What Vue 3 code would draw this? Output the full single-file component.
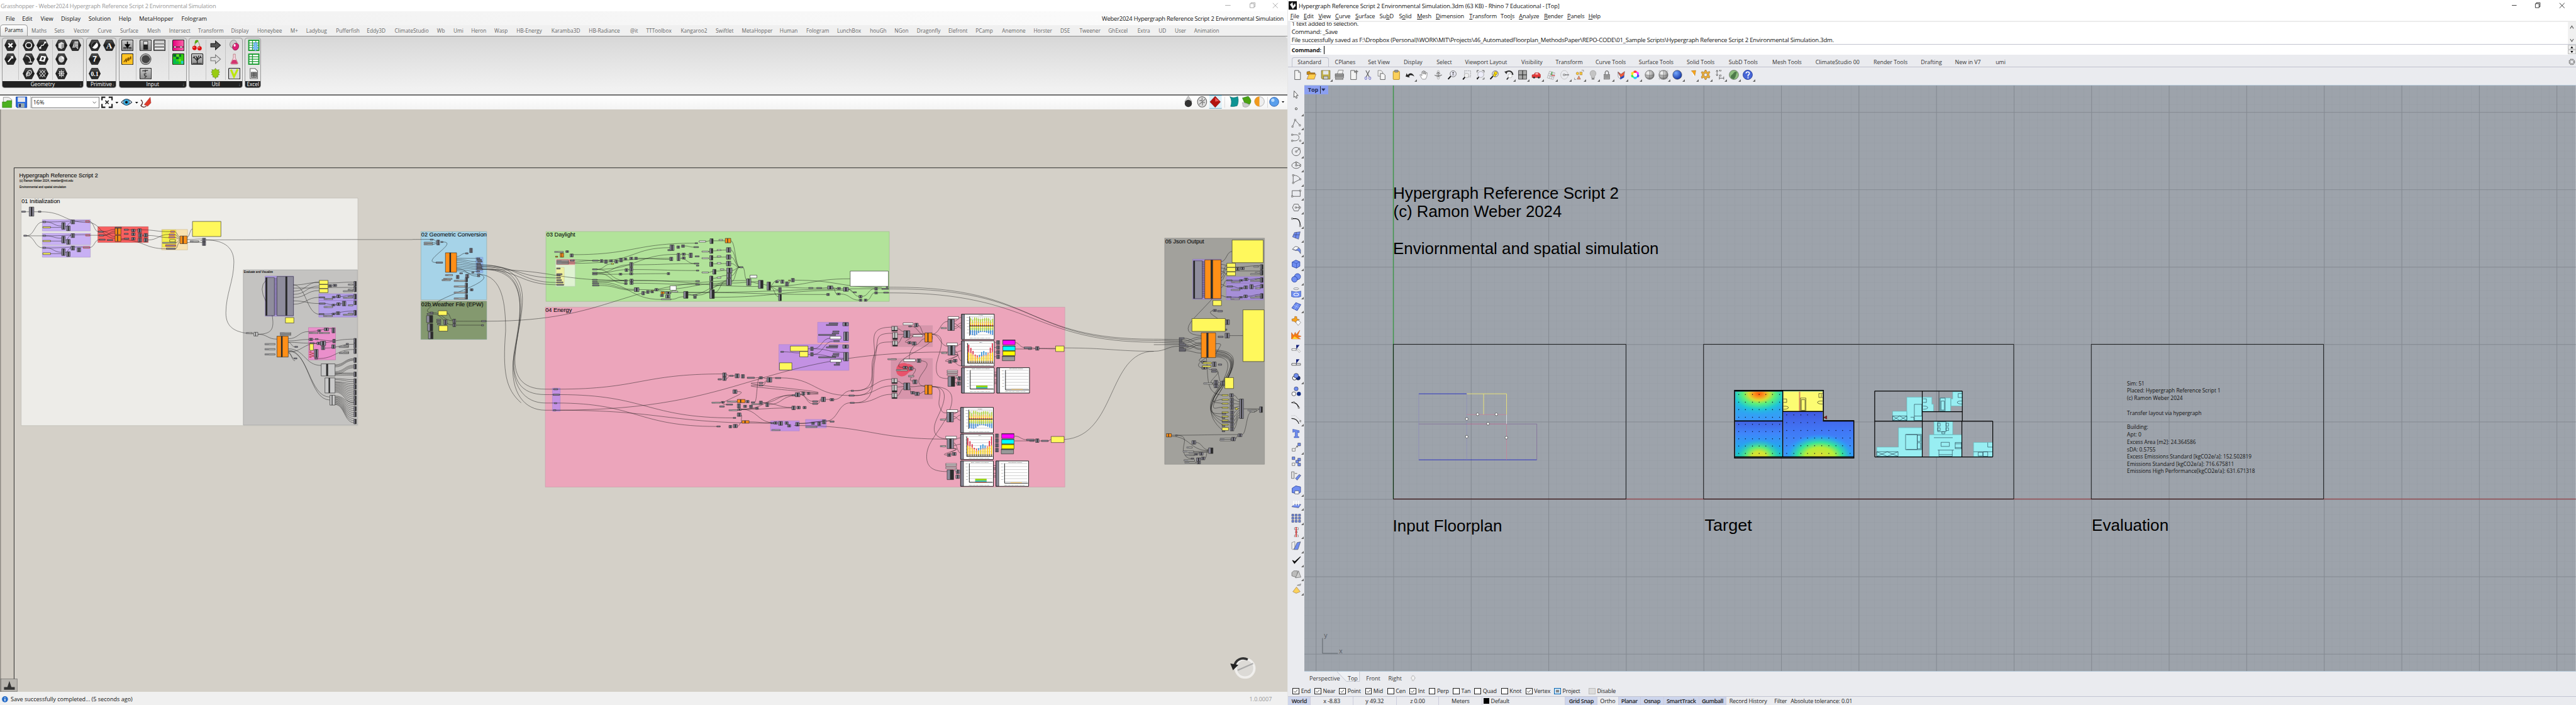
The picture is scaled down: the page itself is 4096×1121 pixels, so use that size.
<script setup>
const u = (n) => `calc(var(--u) * ${n})`
const cells = (s, end) => {
  const a = s.split('|').map((v) => { const i = v.lastIndexOf('@'); return { t: v.slice(0, i), x: +v.slice(i + 1) } })
  return a.map((c, i) => ({ ...c, w: (i + 1 < a.length ? a[i + 1].x : end) - c.x }))
}
const ghMenu = cells('File@17|Edit@66|View@121|Display@182|Solution@264|Help@354|MetaHopper@415|Fologram@541', 640)
const ghTabs = cells('Maths@94|Sets@162|Vector@220|Curve@291|Surface@358|Mesh@439|Intersect@504|Transform@591|Display@689|Honeybee@767|M+@866|Ladybug@913|Pufferfish@1002|Eddy3D@1094|ClimateStudio@1177|Wb@1303|Umi@1352|Heron@1405|Wasp@1474|HB-Energy@1540|Karamba3D@1644|HB-Radiance@1756|@it@1879|TTToolbox@1927|Kangaroo2@2030|Swiftlet@2134|MetaHopper@2212|Human@2325|Fologram@2404|LunchBox@2496|houGh@2594|NGon@2667|Dragonfly@2734|Elefront@2828|PCamp@2909|Anemone@2988|Horster@3082|DSE@3162|Tweener@3219|GhExcel@3305|Extra@3392|UD@3455|User@3503|Animation@3561', 3660)
const rhMenu = cells('_File@3847|_Edit@3887|_View@3931|_Curve@3981|_Surface@4041|Su_bD@4113|S_olid@4171|_Mesh@4225|_Dimension@4281|_Transform@4381|Too_ls@4474|_Analyze@4529|_Render@4604|_Panels@4673|_Help@4736', 4790)
  .map((c) => { const i = c.t.indexOf('_'); return { ...c, a: c.t.slice(0, i), k: c.t[i + 1], b: c.t.slice(i + 2) } })
const rhTabs = cells('CPlanes@3980|Set View@4079|Display@4185|Select@4283|Viewport Layout@4368|Visibility@4536|Transform@4638|Curve Tools@4757|Surface Tools@4886|Solid Tools@5029|SubD Tools@5154|Mesh Tools@5284|ClimateStudio 00@5413|Render Tools@5586|Drafting@5727|New in V7@5829|umi@5950', 6000)
const osnaps = cells('End@3854|Near@3919.5|Point@3993|Mid@4070|Cen@4136.5|Int@4203|Perp@4259.5|Tan@4332|Quad@4396|Knot@4476|Vertex@4549|Project@4634|Disable@4737', 4850)
const checked = ['End', 'Near', 'Point', 'Mid', 'Int', 'Vertex']
const status = [
  ['World', 67, 1], ['x -8.83', 127], ['y 49.32', 129], ['z 0.00', 127], ['Meters', 129], ['Default', 248, 0, 1],
  ['Grid Snap', 95, 1], ['Ortho', 63], ['Planar', 66, 1], ['Osnap', 69, 1], ['SmartTrack', 105, 1], ['Gumball', 82, 1],
]

/* ribbon icons, 36 x 34 */
const hex = (s) => `<path d="M9 1H27L35 17L27 33H9L1 17Z" fill="url(#hexg)" stroke="#111" stroke-width="1.5"/>${s}`
const box = (s, f = 'url(#boxg)') => `<rect x="1" y="0.7" width="34" height="32.6" rx="3" fill="${f}" stroke="#222" stroke-width="2"/>${s}`
const S = (w) => `fill="none" stroke="#fff" stroke-width="${w}"`
const ribbon = [
  { t: 'Geometry', x: 5, w: 245, arrow: 1, groups: [
    { w: 50, cols: [[hex(`<path d="M12 11L24 23M24 11L12 23" ${S(4.5)}/>`), hex(`<path d="M11 25L22 12" ${S(4)}/><path d="M18 8l8 0l0 9z" fill="#fff"/>`), '']] },
    { w: 100, cols: [
      [hex(`<ellipse cx="18" cy="17" rx="9" ry="8" ${S(3)}/>`), hex(`<path d="M10 7C20 8 24 15 24 26M18 26H29" ${S(2.5)}/>`), hex(`<path d="M13 26C6 17 20 3 25 9S17 28 14 22S20 12 21 14S18 20 17 19" ${S(2)}/>`)],
      [hex(`<path d="M11 25L15 17H20L25 9" ${S(2.5)}/><path d="M8 22h6v5H8zM23 6h6v5h-6z" fill="#fff"/>`), hex('<path d="M8 22L14 7L29 9L24 25Z" fill="#fff"/><path d="M14 19L17 11L23 13L20 20Z" fill="#333"/>'), hex(`<path d="M18 7L27 17L18 27L9 17ZM10 7L26 27M26 7L10 27" ${S(1.8)}/>`)]] },
    { w: 94, cols: [
      [hex('<path d="M9 12L18 7L26 11V23L18 28L9 24Z" fill="#ddd"/><path d="M18 14L26 11V23L18 28Z" fill="#999"/>'), hex('<ellipse cx="18" cy="17" rx="9" ry="10" fill="#ccc"/><path d="M18 7L27 15L20 16Z" fill="#fff"/>'), hex(`<path d="M18 6V28M8 17H28M11 9L25 25M25 9L11 25" ${S(1.5)}/><rect x="12" y="11" width="12" height="12" ${S(1.5)}/>`)],
      [hex('<path d="M10 24L16 6H26V28L20 22Z" fill="#bbb" stroke="#fff"/><path d="M16 6V20L10 24M16 20L26 22M16 13H26" stroke="#555" fill="none"/>'), '', '']] }] },
  { t: 'Primitive', x: 256, w: 91, arrow: 1, groups: [{ w: 91, cols: [
    [hex('<circle cx="18" cy="17" r="10" fill="#fff"/><path d="M11 24A10 10 0 0 1 24 9Z" fill="#222"/>'), hex('<text x="18" y="25" font-size="23" font-weight="bold" text-anchor="middle" fill="#fff">7</text>'), hex('<text x="18" y="24" font-size="19" font-weight="bold" text-anchor="middle" fill="#fff" font-family="Liberation Serif">0.1</text>')],
    [hex('<text x="18" y="26" font-size="25" font-weight="bold" text-anchor="middle" fill="#fff" font-family="Liberation Serif">A</text>'), '', '']] }] },
  { t: 'Input', x: 353, w: 203, arrow: 1, groups: [
    { w: 51, cols: [[box('<path d="M18 6V17M12 15L18 23L24 15Z" stroke="#000" stroke-width="3"/><path d="M6 24H30M8 24V29M13 24V29M18 24V29M23 24V29M28 24V29" stroke="#000" stroke-width="1.6"/>'), box('<path d="M7 26L14 17V26L21 12V22L28 9V18" fill="none" stroke="#8a5a00" stroke-width="3"/>', '#ffc425'), '']] },
    { w: 98, cols: [
      [box('<rect x="11" y="4" width="14" height="26" fill="#222"/><rect x="12.500" y="5.500" width="11" height="9" fill="#ddd"/>'), '<circle cx="18" cy="17" r="16" fill="#aaa" stroke="#555" stroke-width="2"/><path d="M28 10A12 12 0 1 0 28 24L32 17Z" fill="#444"/>', box('<path d="M17 5V13M8 9L25 7M20 17L14 18L15 23L20 25L15 30" fill="none" stroke="#444" stroke-width="3"/>')],
      [box('<rect x="3" y="4" width="30" height="6" fill="#eee" stroke="#444"/><rect x="3" y="14" width="30" height="6" fill="#eee" stroke="#444"/><rect x="3" y="24" width="30" height="6" fill="#eee" stroke="#444"/>'), '', '']] },
    { w: 54, cols: [[box('<path d="M1 22H12M12 22H24M24 22H35" stroke="#222" stroke-width="2"/><circle cx="8" cy="22" r="3" fill="#fff" stroke="#222"/><circle cx="26" cy="22" r="3" fill="#fff" stroke="#222"/>', 'url(#mag)'), box('<path d="M3 3H12V10H3ZM20 3H26V10H20ZM11 10H19V17H11Z" fill="#063"/><path d="M12 3H20V10H12ZM19 17H26V24H19Z" fill="#6d2"/><path d="M3 17H11V31H3ZM12 24H19V31H12Z" fill="#0b5"/><path d="M26 22H33V31H26Z" fill="#2cc"/>', '#3c1'), '']] }] },
  { t: 'Util', x: 563, w: 161, arrow: 1, groups: [
    { w: 50, cols: [['<path d="M10 20C11 12 15 8 19 3C22 9 26 14 26 22" fill="none" stroke="#784" stroke-width="1.5"/><path d="M13 2Q20-1 22 4Q18 10 10 12Q11 5 13 2" fill="#5a1"/><circle cx="10" cy="25" r="6.500" fill="#d11"/><circle cx="25" cy="26" r="6.500" fill="#d11"/><circle cx="8" cy="23" r="2" fill="#f99"/><circle cx="23" cy="24" r="2" fill="#f99"/>', box('<path d="M18 30V16M18 22L9 12M18 20L27 11M18 17L14 7M18 17L23 6M9 12L5 13M27 11L31 13M10 12L8 7M27 11L28 7M4 30H32" stroke="#111" stroke-width="2.200" fill="none"/>'), '']] },
    { w: 58, cols: [['<path d="M4 12H18V4L33 17L18 30V22H4Z" fill="#555" stroke="#222" stroke-width="2"/>', '<path d="M4 12H18V4L33 17L18 30V22H4Z" fill="#ddd" stroke="#777" stroke-width="2"/>', '<path d="M18 1L22 6L29 5L27 10L31 12L27 16L30 20L25 22L26 27L20 28L18 33L16 28L10 27L11 22L6 20L9 16L5 12L9 10L7 5L14 6Z" fill="#9c1" stroke="#573" />']] },
    { w: 52, cols: [['<ellipse cx="15" cy="13" rx="10" ry="12" fill="#ccc" stroke="#666" transform="rotate(25 15 13)"/><ellipse cx="22" cy="21" rx="9" ry="11" fill="#d27" stroke="#613" transform="rotate(25 22 21)"/><ellipse cx="19" cy="17" rx="3" ry="4" fill="#fff"/>', '<path d="M15 2H21V13L29 29Q29 32 25 32H11Q7 32 7 29L15 13Z" fill="#f4d4e0" stroke="#944"/><path d="M13 19H23L28 29Q28 31 25 31H11Q8 31 8 29Z" fill="#d3366f"/>', box('<path d="M8 5L17 26L28 4" fill="none" stroke="#bde80c" stroke-width="6"/>', '#d6d6d6')]] }] },
  { t: 'Excel', x: 730, w: 48, groups: [{ w: 48, cols: [[
    '<rect x="3" y="2" width="30" height="30" fill="#fff" stroke="#159a2d" stroke-width="3.500"/><path d="M3 10H33M3 17H33M3 24H33M14 2V32M24 2V32" stroke="#159a2d" stroke-width="2"/><path d="M18 9H28V23H33L23 34L13 23H18Z" fill="#7cc0f5" stroke="#2a7ac0" stroke-width="1"/>',
    '<rect x="3" y="2" width="30" height="30" fill="#fff" stroke="#159a2d" stroke-width="3.500"/><path d="M3 10H33M3 17H33M3 24H33M14 2V32" stroke="#159a2d" stroke-width="2.500"/>',
    '<path d="M7 2H22L29 9V32H7Z" fill="#fff" stroke="#666" stroke-width="2"/><path d="M11 13H26V28H11ZM11 18H26M11 23H26M16 13V28M21 13V28" fill="none" stroke="#222" stroke-width="2"/>']] }] },
]

/* modelling toolbar icons, 30 x 30 */
const page = '<path d="M7 2H18L24 8V29H7Z" fill="#f4f4f4" stroke="#444" stroke-width="1.500"/><path d="M18 2V8H24" fill="none" stroke="#444"/>'
const mag = '<circle cx="18" cy="12" r="9" fill="#eef" fill-opacity=".5" stroke="#555" stroke-width="1.500"/><path d="M11 19L3 28" stroke="#111" stroke-width="3.500"/>'
const ball = (f) => `<circle cx="15" cy="15" r="13.500" fill="${f}" stroke="#333"/>`
const toolIcons = [
  page,
  '<path d="M2 6L10 4L13 9H26V14H2Z" fill="#c98a10" stroke="#543"/><path d="M2 28L8 13H29L24 28Z" fill="#ffcf4d" stroke="#743"/>',
  '<path d="M2 2H28V28H6L2 25Z" fill="#c2b048" stroke="#443"/><rect x="7" y="3" width="16" height="11" fill="#e3e6ea"/><rect x="9" y="19" width="13" height="9" fill="#ccc" stroke="#443"/>',
  '<path d="M8 12L12 1H26L23 12" fill="#eee" stroke="#444"/><path d="M2 12H27V19H2Z" fill="#999" stroke="#222"/><path d="M2 20H27V24H2ZM3 25H25V29H3Z" fill="#ddd" stroke="#222"/>',
  page + '<path d="M18 5H29M24 1V12" stroke="#777" stroke-width="3"/>',
  '<path d="M9 2L19 21M20 2L10 21" stroke="#555" stroke-width="2"/><ellipse cx="9" cy="25" rx="3" ry="4" fill="none" stroke="#77c" stroke-width="2"/><ellipse cx="21" cy="25" rx="3" ry="4" fill="none" stroke="#77c" stroke-width="2"/>',
  '<path d="M4 2H13L18 7V19H4Z" fill="#eee" stroke="#444"/><path d="M11 11H20L25 16V29H11Z" fill="#f7f7f7" stroke="#444" stroke-width="1.500"/>',
  '<rect x="6" y="4" width="19" height="25" rx="2" fill="#fbd05a" stroke="#a77a10" stroke-width="1.500"/><rect x="10" y="1" width="11" height="6" rx="2" fill="#999" stroke="#444"/>',
  '<path d="M8 16C14 8 22 8 28 20C20 14 15 15 12 19L14 23L2 20L5 10Z" fill="#222"/>',
  '<path d="M9 26L3 15L6 14L9 18V6L12 5L13 13V3L16 3L17 13V5L20 5V14L22 8L25 9L24 20L20 28H11Z" fill="#fff" stroke="#444"/>',
  '<ellipse cx="15" cy="15" rx="4" ry="13" fill="none" stroke="#bbb" stroke-width="2"/><path d="M4 16Q15 22 26 15M15 7V22M10 12L15 7L20 12" stroke="#555" stroke-width="1.800" fill="none"/>',
  mag + '<path d="M15 9H21M18 6V12M15 15H21" stroke="#333" stroke-width="1.500"/>',
  '<rect x="9" y="3" width="18" height="18" fill="none" stroke="#555" stroke-dasharray="3 2"/><circle cx="15" cy="17" r="7" fill="#eee" stroke="#888"/><path d="M10 22L4 29" stroke="#111" stroke-width="3.500"/>',
  '<path d="M5 8V2H10M20 2H26V8M26 23V28H21M5 23V28" fill="none" stroke="#333" stroke-width="1.500"/><circle cx="16" cy="14" r="9" fill="#eef" fill-opacity=".6" stroke="#777"/><path d="M10 21L5 28" stroke="#111" stroke-width="3"/>',
  mag + '<circle cx="19" cy="10" r="5" fill="#fd0" stroke="#553"/><circle cx="16" cy="16" r="4" fill="#fd0" stroke="#553"/>',
  '<path d="M5 8C14 0 26 4 27 15" stroke="#333" stroke-width="4" fill="none"/><path d="M2 5L12 4L8 13Z" fill="#333"/><circle cx="19" cy="18" r="6" fill="#fff" stroke="#888"/><path d="M14 23L9 29" stroke="#222" stroke-width="3"/>',
  '<path d="M3 2H27V28H3Z" fill="#aaa" stroke="#333" stroke-width="1.500"/><path d="M15 2V28M3 15H27" stroke="#222" stroke-width="2"/>',
  '<path d="M2 15L8 14L11 9H22L27 14V23H2Z" fill="#e33b3b" stroke="#911"/><path d="M12 10H20V14H12Z" fill="#fcc"/><circle cx="8" cy="23" r="3" fill="#333"/><circle cx="22" cy="23" r="3" fill="#333"/>',
  '<path d="M4 24L11 4L27 9L22 29ZM7 17L24 22M9 11L26 16M10 26L17 6M16 28L22 8" stroke="#888" fill="none"/><path d="M16 16L27 18" stroke="#d33" stroke-width="2"/><path d="M16 16L19 6" stroke="#3a3" stroke-width="2"/>',
  '<ellipse cx="14" cy="15" rx="11" ry="13" fill="none" stroke="#bbb" stroke-width="1.500"/><path d="M14 15H28" stroke="#222" stroke-width="1.500"/><rect x="11" y="13" width="5" height="4" fill="#fff" stroke="#222"/>',
  '<circle cx="10" cy="11" r="4" fill="#fc3" stroke="#864"/><rect x="17" y="7" width="7" height="8" fill="#fc3" stroke="#864"/><path d="M14 18L19 28H9Z" fill="#e97" stroke="#743"/><path d="M22 1H28V6M1 24V29H6" fill="none" stroke="#555"/>',
  '<path d="M10 19C3 13 6 2 15 2S27 13 20 19V24H10Z" fill="#c4c4c4" stroke="#888"/><path d="M11 25H19V29H11Z" fill="#777"/>',
  '<path d="M10 14V7Q15-1 20 7V14" fill="none" stroke="#777" stroke-width="2.500"/><rect x="7" y="14" width="16" height="14" fill="#aaa" stroke="#444"/><path d="M8 18H22M8 22H22" stroke="#555"/>',
  '<path d="M5 6L14 13L25 5L22 20L12 23Z" fill="#f05a3c" stroke="#533"/><path d="M5 8L12 20L12 27L6 22Z" fill="#fff" stroke="#445"/><path d="M12 23L24 16L23 23L12 29Z" fill="#2b49b5"/>',
  '<circle cx="15" cy="8" r="5.500" fill="#f33"/><circle cx="21" cy="11" r="5" fill="#f3f"/><circle cx="22" cy="18" r="5" fill="#54f"/><circle cx="15" cy="22" r="5.500" fill="#2cf"/><circle cx="8" cy="18" r="5" fill="#3e5"/><circle cx="8" cy="11" r="5" fill="#fd2"/><circle cx="15" cy="15" r="6" fill="#fff"/>',
  ball('url(#gball)') + '<path d="M2 15Q15 20 28 15M15 2V28" fill="none" stroke="#555"/>',
  '<path d="M4 0V30M10 0V30M20 0V30M26 0V30M0 4H30M0 26H30" stroke="#aaa" stroke-width="1"/>' + ball('url(#gball)') + '<path d="M2 15Q15 20 28 15M15 2V28" fill="none" stroke="#555"/>',
  ball('url(#bball)'),
  '<path d="M14 3L27 2L24 18Z" fill="#f7a51c" stroke="#a60"/><path d="M14 3L24 18L21 20Z" fill="#fff"/>',
  '<path d="M13 1H17L18 5L22 7L26 4L28 8L25 12V16L28 20L26 25L22 23L18 25L17 29H13L12 25L8 23L4 26L2 21L5 17V12L2 9L4 5L8 7L12 5Z" fill="#e8ac38" stroke="#85561a"/><circle cx="15" cy="15" r="5" fill="#eaebef" stroke="#85561a"/>',
  '<path d="M6 2V17M3 5L6 1L9 5M3 14L6 18L9 14M12 2H18M12 17H18M13 20V29M26 20V29M13 25H26" fill="none" stroke="#333" stroke-width="1.300"/><path d="M14 0h4v4h-4zM14 15h4v4h-4z" fill="#fff" stroke="#333"/>',
  '<circle cx="15" cy="15" r="14" fill="#8fbf7f" stroke="#444"/><path d="M6 24C4 16 10 16 13 11S20 4 24 7C20 16 22 22 14 28Z" fill="#4e7a4a"/>',
  '<circle cx="15" cy="15" r="14" fill="#4766d8" stroke="#1c2f8c" stroke-width="1.500"/><path d="M10 11Q10 6 15 6T20 11Q20 14 16 16V20" fill="none" stroke="#fff" stroke-width="3"/><circle cx="16" cy="24" r="2" fill="#fff"/>',
]
const noTri = [0, 1, 3, 4, 5, 6, 7, 9, 10, 11, 12, 13, 14, 25]
const b = '#6f8df0'
const d = 'fill="none" stroke="#333" stroke-width="1.300"'
const cube = (x, y) => `<path d="M${x} ${y}h8v8h-8z" fill="${b}" stroke="#223"/>`
const sideIcons = [
  '<path d="M9 3L21 17L15 17L18 24L15 25L12 19L8 22Z" fill="#fff" stroke="#333" stroke-width="1.500"/>',
  '<circle cx="15" cy="15" r="3" fill="#fff" stroke="#222" stroke-width="1.500"/>',
  `<path d="M4 25L12 5L26 21" ${d}/><path d="M2 23h4v4H2zM10 3h4v4h-4zM24 19h4v4h-4z" fill="#fff" stroke="#222"/>`,
  `<path d="M3 8H14C28 8 26 26 12 26H3" ${d}/><path d="M1 6h4v4H1zM1 24h4v4H1zM23 3h4v4h-4zM25 24h4v4h-4z" fill="#fff" stroke="#222"/>`,
  `<circle cx="15" cy="15" r="12.500" ${d}/><path d="M15 15L24 7" ${d}/><path d="M13 13h4v4h-4zM22 5h4v4h-4z" fill="#fff" stroke="#222"/>`,
  `<ellipse cx="15" cy="15" rx="13" ry="9" ${d}/><path d="M15 6V15H28" ${d}/><path d="M13 4h4v4h-4zM26 13h4v4h-4zM13 13h4v4h-4z" fill="#fff" stroke="#222"/>`,
  `<path d="M27 15C24 6 14 3 6 3V26L27 15" ${d}/><path d="M4 1h4v4H4zM4 24h4v4H4zM25 13h4v4h-4z" fill="#fff" stroke="#222"/>`,
  `<path d="M3 6H27V23H3Z" ${d}/><path d="M1 21h4v4H1zM25 4h4v4h-4z" fill="#fff" stroke="#222"/>`,
  `<path d="M4 15L9 5H21L26 15L21 25H9ZM14 15H26" ${d}/><path d="M12 13h4v4h-4zM24 13h4v4h-4z" fill="#fff" stroke="#222"/>`,
  '<path d="M3 5H14Q27 6 27 26" fill="none" stroke="#111" stroke-width="2.200"/><path d="M1 3h4v4H1zM25 25h4v4h-4z" fill="#fff" stroke="#222"/>',
  `<path d="M4 18L10 5L27 3L22 25Z" fill="${b}" stroke="#335"/><path d="M7 12L25 12M16 4L13 22" stroke="#335"/>`,
  `<path d="M4 12L12 4Q24 4 28 14V25Q22 13 14 16Z" fill="${b}" stroke="#333"/><path d="M4 12L12 4Q18 3 23 8L14 14Z" fill="#fff" stroke="#333"/>`,
  `<path d="M3 9L14 3L26 8V21L16 27L3 22Z" fill="${b}" stroke="#223c9a" stroke-width="1.500"/><path d="M3 9L16 13L26 8M16 13V27" stroke="#223c9a" fill="none"/>`,
  `<circle cx="19" cy="11" r="9" fill="${b}" stroke="#223c9a" stroke-width="1.500"/><circle cx="10" cy="19" r="8.500" fill="${b}" stroke="#223c9a" stroke-width="1.500"/>`,
  `<ellipse cx="15" cy="4" rx="8" ry="3" fill="none" stroke="#555"/><path d="M1 11Q15 16 29 11V27Q15 33 1 27Z" fill="${b}" stroke="#223c9a"/><ellipse cx="15" cy="21" rx="7" ry="4" fill="none" stroke="#fff" stroke-width="2"/>`,
  `<path d="M2 20L14 4L29 10L18 28Z" fill="${b}" stroke="#223c9a" stroke-width="1.500"/><path d="M8 12L23 19M21 7L10 24" stroke="#cdf"/>`,
  '<path d="M2 10L10 8L11 2L17 3L17 9L25 12L17 15L15 21L9 17L3 16Z" fill="#f6a21a" stroke="#853"/><path d="M14 19L19 13L24 16L29 20L25 24L21 29L17 24Z" fill="#fff" stroke="#555"/>',
  '<path d="M1 28V9L8 18L12 8L15 15L26 2L20 17L30 20L20 24L28 28Z" fill="#f47b12" stroke="#c52"/><path d="M3 28L10 20L22 28Z" fill="#ffd233"/>',
  '<path d="M15 3H25L16 15V24Z" fill="#14227a"/><path d="M2 14H15V19H2Z" fill="#fff" stroke="#333"/><path d="M16 15L20 14L28 22L24 26Z" fill="#eee" stroke="#888"/>',
  '<path d="M15 4H25L16 16V21H15Z" fill="#14227a"/><path d="M2 17H28V22H2Z" fill="none" stroke="#333" stroke-width="1.300"/><path d="M2 17H15V22H2Z" fill="#fff" stroke="#333"/>',
  `<circle cx="10" cy="19" r="6" fill="#fff" stroke="#111" stroke-width="1.500"/><circle cx="21" cy="19" r="6" fill="#122c80" stroke="#111"/><circle cx="15" cy="12" r="7" fill="${b}" stroke="#111"/>`,
  `<circle cx="8" cy="23" r="6" fill="#fff" stroke="#222" stroke-width="1.300"/><circle cx="23" cy="23" r="6" fill="#122c80"/><circle cx="15" cy="8" r="6" fill="${b}" stroke="#223"/>`,
  '<path d="M1 8Q18 6 23 24" fill="none" stroke="#111" stroke-width="2.500"/><path d="M6 5h4v4H6zM21 21h4v4h-4z" fill="#fff" stroke="#222"/>',
  '<path d="M1 12Q18 12 23 28" fill="none" stroke="#222" stroke-width="2.200"/><path d="M1 4L12 3L28 18" fill="none" stroke="#888" stroke-dasharray="2 2"/><path d="M26 18h4v4h-4z" fill="#fff" stroke="#222"/>',
  `<path d="M5 3L24 7V13H21L19 10V25H23V28H9V25H12V10L8 11L5 12Z" fill="${b}" stroke="#223c9a"/>`,
  `<path d="M3 19h9v8H3z" fill="#eee" stroke="#333"/>${cube(20, 3)}<path d="M12 19L19 12M15 12H19V16" ${d}/>`,
  `${cube(3, 1)}<path d="M3 19h8v8H3z" fill="#eee" stroke="#333"/>${cube(20, 5)}${cube(14, 11)}${cube(20, 20)}`,
  `<path d="M1 4h8v20H1z" fill="#ddd" stroke="#333"/><path d="M13 24L24 12L29 15L18 29Z" fill="${b}" stroke="#223"/><path d="M11 9L18 9" ${d}/>`,
  `<path d="M3 10L14 3L28 6V22L20 27L3 23Z" fill="${b}" stroke="#223c9a" stroke-width="1.500"/><path d="M11 18H23V27H11Z" fill="#fff" stroke="#333"/>`,
  `<path d="M2 24L9 17H29L22 27Z" fill="${b}" stroke="#335"/><path d="M8 20V6M15 20V6M22 20V6" stroke="#fff" stroke-width="3"/>`,
  [0, 1, 2].map((i) => [0, 1, 2].map((j) => `<path d="M${2 + i * 10} ${3 + j * 9}h6v6h-6z" fill="${b}" stroke="#223"/>`).join('')).join(''),
  '<path d="M10 2h11v6H10zM10 24h11v6H10zM13 13h5v5h-5z" fill="#fff" stroke="#333"/><path d="M15 0V30" stroke="#d11" stroke-width="2.500"/>',
  `<path d="M2 5L11 2V22L5 26L2 24Z" fill="#eee" stroke="#555"/><path d="M8 26L18 5L28 3L20 26Z" fill="${b}" stroke="#333"/>`,
  '<path d="M4 15L10 24L28 4L11 19Z" fill="#111" stroke="#111" stroke-width="2"/>',
  '<path d="M2 10L8 5H19V19L14 24L2 20Z" fill="#bbb" stroke="#444"/><path d="M22 5L29 24L13 26Z" fill="#ccc" stroke="#444"/>',
  '<path d="M16 10L27 24L15 29L5 24Z" fill="#fbd15c" stroke="#864"/><path d="M18 5L29 1L27 6Z" fill="#ddd" stroke="#444"/>',
]
const sideNoTri = [0, 16, 17, 18, 19, 21, 22, 24, 26, 27]

/* ---- definition graph ----
   Each cluster keeps its own local grid; "m" maps it to the canvas. */
const parse = (s) => s.trim().split(/\s*;\s*/).filter(Boolean).map((r) => r.trim().split(/\s+/).map(Number))
const wire = ([x1, y1, x2, y2]) => {
  const dx = x2 - x1
  const k = dx > 0 ? Math.max(dx * 0.5, 6) : Math.min(Math.abs(dx) * 0.6 + 40, 140)
  return `M${x1} ${y1}C${x1 + k} ${y1} ${x2 - k} ${y2} ${x2} ${y2}`
}
const K = { c: '#8d8b9b', g: '#8d8b9b', o: '#ff8f17', y: '#fff85c', w: '#fff', l: '#c9c9c9', b: '#8d8b9b', L: '#c9c9c9', r: '#8d8b9b' }
const cluster = (m, groups, nodes, wires, free = '') => ({
  m, groups,
  nodes: Object.entries(nodes).flatMap(([k, s]) => parse(s).map(([x, y, w, h]) => ({ k, x, y, w, h, f: K[k] }))),
  wires: parse(wires).map(wire).join('') + free,
})
const fan = (x1, ys, x2, y0, dy) => ys.map((y, i) => `${x1} ${y} ${x2} ${y0 + i * dy}`).join(';')
const clusters = [
  cluster('matrix(.7015 0 0 .523 0 480)',
    [[90, 211, 1431, 1297, '#edece8', '#b9b5ad'], [180, 334, 204, 65, '#c8b0f4', '#a99bc4'], [180, 411, 205, 66, '#c8b0f4', '#a99bc4'], [180, 483, 204, 65, '#c8b0f4', '#a99bc4'],
      [416, 374, 214, 90, '#f85f5f', '#b96060'], [687, 390, 110, 116, '#f8e2b0', '#cdb98a'], [690, 393, 58, 97, '#f3f04c', '#c7c340'],
      [1034, 620, 485, 885, '#c4c3c1', '#999'], [1127, 656, 121, 228, '#b09ce6', '#87b'], [1355, 757, 161, 37, '#b3a0e8', '#97c'], [1355, 795, 161, 94, '#b3a0e8', '#97c'], [1311, 949, 115, 184, '#ea8fcb', '#b7a']],
    { g: '92 285 16 7;163 285 11 7;101 422 12 7;182 343 12 8;182 422 12 7;182 491 12 7;418 399 20 7;421 420 20 7;422 445 25 6;456 447 23 6;489 377 27 6;528 388 17 7;528 412 17 6;528 439 20 6;707 496 38 7;1357 774 23 6;1357 809 25 7;1357 869 20 7;1253 1056 12 6;1250 1122 12 6;1317 1035 18 6;1471 1039 10 6;1340 1012 12 6;1338 1123 12 6',
      c: '124 262 20 52;262 351 15 38;283 370 15 27;302 336 15 22;262 429 15 38;283 447 15 27;302 414 15 22;262 500 15 38;283 517 15 27;302 485 15 22;328 495 15 22;559 389 15 14;586 386 15 21;559 410 15 14;588 413 15 21;612 413 15 19;559 436 15 13;587 440 15 20;612 440 15 20;860 440 14 20;860 461 14 20;1395 705 15 12;1415 703 16 11;1412 771 13 9;1431 763 15 16;1411 816 13 9;1431 808 15 15;1455 799 15 26;1411 867 13 9;1429 859 15 16;1350 962 13 10;1378 952 18 15;1411 952 12 27;1314 1010 15 13;1347 1032 15 14;1362 1027 22 24;1414 1016 11 20;1410 1047 14 21;1366 1055 14 20;1336 1074 16 45',
      b: '1504 686 10 28;1504 717 10 28;1504 759 10 28;1504 797 10 22;1504 851 10 28;1504 1011 10 26;1504 1038 10 27;1504 1070 10 27;1504 1121 10 27;1504 1158 10 27;1504 1202 10 27;1504 1241 10 28;1504 1274 10 26;1504 1306 10 27;1504 1339 10 21;1504 1363 10 28;1504 1399 10 26;1504 1430 10 28;1504 1471 10 27',
      o: '489 383 25 36;489 424 25 34;765 427 30 44;1177 998 48 119', y: '182 374 33 7;182 452 33 7;182 523 33 10;818 344 121 86;1357 680 37 22;1357 704 37 22;1357 728 37 22;1213 892 36 31;1316 1042 16 37;721 448 24 12',
      s: '691 463 55 6;704 478 42 7;808 454 36 7;1047 977 25 7;1191 978 45 6;1191 988 45 5;1126 1040 43 7;1126 1069 43 7;1126 1099 43 6;1480 701 20 6;1480 730 20 7;1459 739 40 6;1377 783 37 6;1377 828 37 7;1375 880 38 6;1459 776 40 6;1480 770 20 5;1459 873 40 6;1480 867 20 5;1480 819 20 6;1314 977 37 6;1356 977 44 6;1441 1057 40 6;1462 1050 20 6;1442 1092 40 6;1462 1086 20 6',
      r: '364 339 16 10;364 418 18 9;354 488 27 9;725 398 17 9;719 415 23 9;718 430 25 9;704 477 42 9;1315 1086 8 5;1325 1094 8 5;1315 1100 8 5;1325 1108 8 5;1315 1114 8 5',
      l: '1079 976 17 21;1365 1156 59 69;1381 1236 43 86;1402 1335 22 56' },
    `108 289 124 289;144 289 163 289;174 289 372 350;372 350 489 440;113 426 182 347;113 426 182 426;113 426 182 495;194 347 364 341;194 347 262 370;194 426 364 420;194 426 262 440;194 495 354 490;194 495 262 520;215 378 262 378;215 456 262 456;215 528 262 528;277 374 302 350;277 451 302 424;277 521 302 496;380 344 418 402;382 423 421 423;381 493 422 448;438 402 489 390;441 423 489 400;438 402 489 430;441 423 489 410;545 392 559 392;574 392 586 392;601 392 725 403;603 424 612 424;627 424 718 436;627 450 719 418;514 444 528 442;514 448 707 500;745 500 765 460;742 403 765 432;742 419 765 440;743 435 765 446;746 466 765 452;795 447 860 444;795 464 860 464;844 457 860 452;874 449 1521 447;795 434 818 387;1096 987 1177 1015;1247 706 1357 692;1247 742 1357 689;1247 760 1357 712;1247 778 1357 738;1247 797 1357 812;1247 816 1357 777;1247 706 1357 873;1247 724 1504 720;1394 695 1504 690;1425 774 1504 765;1380 812 1411 818;1425 818 1455 812;1377 872 1504 855;1225 1013 1311 972;1311 972 1411 955;1225 1025 1314 1017;1329 1016 1414 1024;1225 1033 1317 1038;1335 1038 1504 1015;1225 1088 1347 1040;1225 1070 1365 1165;1225 1083 1402 1345;1225 1078 1402 1362;1225 1033 1253 1059;1225 1090 1250 1125;1225 1095 1254 1138;1350 1126 1504 1074;1380 1066 1504 1044;${fan(1424, [1161, 1167, 1173], 1504, 1126, 5)};${fan(1424, [1200, 1207, 1216], 1504, 1164, 7)};${fan(1424, [1208, 1213, 1221], 1504, 1208, 6)};${fan(1424, [1240, 1246, 1258, 1262, 1268, 1274, 1280, 1286, 1292, 1298, 1304, 1310, 1316], 1504, 1246, 11)};${fan(1424, [1339, 1344, 1349, 1354, 1359, 1364, 1369, 1374, 1379, 1384, 1388], 1504, 1376, 11.500)}`,
    Array.from({ length: 30 }, (_, i) => `M1166 ${668 + i * 7.1}H1178`).join('') + 'M1130 680Q1098 720 1130 800M1096 987C1160 987 1165 950 1157 880M874 450C960 450 994 500 994 577C994 680 960 760 960 865C960 950 1000 980 1079 985'),
  cluster('matrix(.92474 0 0 .5102 1230 660)',
    [[27, 59, 212, 399, '#a6d3e8', '#8aa'], [27, 466, 212, 223, '#84996f', '#798'], [430, 59, 1107, 408, '#b2e39a', '#9b8'], [428, 501, 1675, 1051, '#eca5bb', '#c899a8'],
      [204, 209, 23, 92, '#8fb3e8', '#8ac'], [461, 219, 63, 160, '#dff2d2', '#bcb'], [464, 222, 59, 30, '#e99', '#c88'], [463, 269, 26, 102, '#eef0a0', '#cc9'],
      [451, 974, 25, 135, '#c391e3', '#a8c'], [1306, 589, 100, 118, '#c391e3', '#a8c'], [1181, 719, 226, 151, '#c391e3', '#a8c'], [1154, 1165, 93, 59, '#c391e3', '#a8c'], [1267, 1157, 67, 49, '#c391e3', '#a8c']],
    { g: '57 103 9 6;91 117 7 6;76 237 21 7;171 183 8 7;207 213 10 6;207 222 15 6;210 231 14 6;207 243 12 6;207 251 14 6;207 260 16 6;207 269 16 6;207 277 18 6;207 289 9 6;191 295 7 6;152 300 9 6;209 306 8 7;209 317 8 6;57 529 9 7;47 537 19 7;78 572 13 7;78 584 13 7;80 597 11 6;222 579 15 7;222 603 7 7;465 272 11 6;465 305 17 7;465 313 11 5;465 326 12 6;465 340 15 6;465 353 20 6;465 367 22 6;508 225 13 7;580 226 19 6;580 277 15 6;580 297 15 6;580 306 15 6;580 338 15 6;580 350 15 6;580 360 20 6;580 371 21 6;823 164 9 7;911 124 8 6;907 147 15 6;911 201 13 6;908 243 15 6;915 255 8 6;915 284 8 6;913 346 12 6;913 365 12 6;905 428 12 6;1055 264 10 7;1277 386 14 6;1303 386 16 6;1421 411 10 6;1527 380 6 7;1513 391 21 6;1519 413 15 6;455 977 13 7;453 1009 21 7;457 1059 8 6;454 1100 8 6;1187 759 9 6;1343 593 28 6;1334 602 36 6;1355 640 20 6;1353 651 21 6;1309 660 55 6;1358 696 18 6;1343 724 28 6;1334 733 36 6;1356 771 19 6;1353 782 21 6;1309 791 55 6;1366 824 11 7;1359 835 18 6;985 919 11 7;1023 899 11 6;1079 910 23 7;1118 940 11 7;1118 955 11 6;1170 912 17 6;1224 1012 9 7;1290 1048 16 7;1290 1062 16 7;1414 986 8 7;1407 1014 17 7;1411 1057 13 6;1092 1054 11 6;990 1078 15 7;1012 1067 20 6;1034 1145 8 6;981 1195 11 6;1156 1176 9 6;1346 1166 13 7',
      c: '78 109 9 28;184 157 9 25;141 315 9 19;171 309 10 21;186 393 9 12;101 575 10 28;130 571 9 23;130 597 9 18;494 171 9 10;508 190 10 17;605 223 9 15;619 225 9 20;635 224 10 12;652 226 10 17;667 215 10 21;682 214 9 10;700 209 10 13;716 209 9 13;700 240 10 25;685 276 9 16;700 269 10 23;666 303 9 10;700 299 10 13;683 341 9 11;701 337 10 16;683 358 9 10;701 354 10 14;821 299 8 12;830 137 13 33;852 143 9 14;867 137 10 14;853 186 9 43;869 185 10 13;869 207 10 13;829 209 10 20;892 185 10 26;1012 153 14 27;1012 195 14 26;1012 232 14 28;1013 272 17 28;1013 303 15 27;1012 333 16 40;1077 335 14 39;1170 346 9 12;1187 342 10 19;1202 353 10 24;1221 333 10 20;1338 377 17 19;1369 386 11 11;1389 385 16 23;1335 421 9 12;1368 419 11 10;1490 387 9 14;1490 411 9 12;1439 432 10 14;1440 454 9 12;1456 454 9 12;715 387 15 23;739 409 9 20;754 404 9 16;768 407 9 10;781 392 10 14;799 427 10 12;816 411 17 12;816 429 14 18;906 438 9 11;1180 387 9 28;1387 591 18 19;1390 646 15 50;1387 722 18 19;1390 765 15 50;1283 734 9 20;1283 767 9 19;1000 885 11 22;1000 909 11 20;1040 891 13 23;1060 895 10 20;1118 907 10 13;1143 912 15 27;1033 984 13 21;995 1052 10 9;1075 1046 10 13;1047 1066 10 24;1067 1074 10 13;1086 1074 10 14;1118 1050 10 19;1139 1061 9 21;1106 1087 9 11;1049 1095 11 9;1234 1001 15 23;1255 997 10 17;1272 999 9 12;1318 1027 13 26;1346 1035 12 13;1223 1079 11 21;1239 1080 11 15;1259 1081 10 13;1047 1119 12 20;1020 1192 9 14;1034 1186 13 19;1165 1171 11 13;1180 1169 13 22;1201 1171 10 14;1209 1187 10 14;1235 1175 11 20;1286 1173 10 13;1306 1173 10 18;1321 1160 11 23',
      b: '170 329 7 24;170 360 7 27;170 392 7 28;170 426 7 28;45 550 20 41;48 598 17 42;51 645 15 41;959 101 10 28;958 158 10 28;958 199 10 27;958 236 10 27;968 280 10 28;958 319 10 28;958 353 10 41;874 409 14 40;958 399 15 51;1115 344 15 47;1143 354 11 47;1180 426 9 37',
      L: '1545 614 18 26;1548 650 15 38;1548 699 15 29;1545 919 17 27;1546 957 15 39;1546 1005 15 29',
      o: '106 183 36 114;476 185 11 24;461 203 7 6;1008 99 18 26;801 411 11 12;1047 1040 25 19;1062 1164 23 15', y: '83 522 28 26;85 609 28 32;641 244 7 7;771 401 5 5;1212 342 5 5;1218 728 57 30;1248 760 27 31;1183 826 40 42',
      w: '924 113 21 8;988 105 12 6;933 173 21 6;982 164 12 6;933 212 21 6;982 201 12 6;982 240 12 8;933 295 21 6;992 277 12 6;982 325 12 7;830 376 20 26;836 407 19 6;1088 314 22 16;1175 342 8 6;1411 290 123 89;1346 671 35 16;1347 806 35 16',
      s: '37 121 27 6;37 131 28 6;106 310 23 7;100 332 27 7;95 340 27 6;134 344 36 7;134 377 36 7;134 412 36 7;134 447 36 7;458 175 28 6;465 227 38 7;465 235 38 6;465 243 38 6;802 452 31 6;965 1056 27 6;1014 1050 31 6;1020 1100 28 6;1093 1065 25 5;1158 1216 27 6;1268 1198 36 6' },
    '0 105 57 105;66 105 78 117;64 124 78 124;65 134 78 130;98 120 76 240;142 205 171 186;142 215 207 216;142 222 207 234;142 230 207 246;142 240 207 254;142 250 207 263;142 260 207 272;142 270 207 280;142 280 207 292;142 288 209 309;142 275 209 320;219 254 465 357;222 263 465 330;225 280 465 370;225 280 683 345;428 980 455 980;468 980 1000 891;428 1012 453 1012;474 1012 1034 1148;428 1061 457 1061;465 1061 981 1198;428 1103 454 1103;462 1103 1726 763;462 1103 1160 1179;66 533 130 580;66 540 130 605;111 535 130 576;139 583 222 583;139 606 222 606;237 583 1077 345;518 194 911 127;599 229 830 153;518 225 605 229;504 239 580 229;504 245 829 215;595 280 853 192;595 280 641 248;595 301 700 253;595 301 700 281;595 309 821 305;595 280 683 345;595 301 683 362;595 342 683 347;595 353 701 345;600 364 715 397;601 374 715 402;595 353 802 456;710 253 908 247;710 281 915 287;725 215 829 222;710 345 913 349;710 361 913 368;710 345 1115 380;877 143 907 150;862 193 869 191;879 191 892 195;862 215 908 246;888 415 1490 393;888 425 905 431;888 430 1012 370;791 398 1012 360;730 398 874 415;917 431 1012 363;833 455 874 440;973 415 1012 345;973 443 1389 402;888 415 1335 427;945 117 959 113;969 113 1008 113;954 176 958 176;968 172 1012 167;968 210 1012 208;968 248 1012 246;954 298 968 292;978 290 1013 286;968 332 1013 316;968 372 1012 352;1026 113 1055 267;1026 167 1055 267;1026 208 1055 267;1026 246 1055 267;1030 286 1055 267;1028 316 1055 267;1028 352 1055 267;1065 267 1077 342;1028 360 1115 352;1091 354 1115 362;1130 368 1143 372;1154 375 1170 350;1154 378 1411 335;1154 380 1277 389;1154 382 1180 400;1154 385 1180 440;1231 343 1513 385;1212 362 1221 343;1291 389 1303 389;1319 389 1338 387;1355 387 1369 391;1355 387 1368 424;1405 397 1439 438;1380 424 1440 460;1405 397 1421 414;1449 438 1490 393;1465 460 1490 417;1499 393 1513 393;1499 417 1519 417;1011 895 1023 902;1011 920 1023 902;1034 902 1040 902;1102 914 1118 912;1128 912 1143 920;1129 943 1143 930;1158 914 1170 914;1187 914 1407 1017;1129 958 1143 935;1249 1011 1290 1051;1281 1003 1118 943;1281 1010 1118 958;1249 1011 1290 1065;1306 1051 1318 1038;1306 1065 1318 1044;1331 1040 1346 1040;1358 1041 1414 989;1046 994 1014 1070;1128 1060 1224 1013;1148 1070 1234 1018;1128 1060 1223 1087;1060 1098 1223 1090;1060 1098 1106 1092;1060 1098 1165 1176;1060 1098 1224 1016;1059 1130 1062 1170;1085 1171 1156 1177;1047 1197 1062 1172;1247 1180 1346 1166;1332 1167 1411 1060;1103 1057 1118 912;1292 744 1390 765;1292 744 1346 683;1292 777 1358 698;1292 777 1390 800;1196 762 1248 768;1275 744 1283 744;1275 777 1283 777',
    'M219 254C420 254 340 560 332 760C322 900 350 980 428 980M222 263C400 263 345 560 330 760C316 930 350 1012 428 1012M223 272C390 272 345 560 326 780C316 960 360 1061 428 1061M225 280C385 280 350 560 324 820C316 1000 360 1103 428 1103M217 309C290 320 300 480 300 640C290 880 300 980 350 1060M217 309Q260 330 165 400T80 475Q30 525 57 532'),
  cluster('matrix(.66964 0 0 .37628 2150 880)',
    [[757, 241, 184, 166, '#d795ab', '#c899a8'], [757, 501, 184, 319, '#d795ab', '#c899a8']],
    { g: '835 243 12 8;1349 410 33 13;1368 422 14 8;1360 1140 34 12;1374 1151 20 7;1426 1149 30 10', c: '861 222 16 28;813 281 27 55;832 367 14 18;850 370 18 25;872 505 17 27;810 563 19 18;836 567 18 25;854 671 18 30;813 695 27 55;845 763 16 19;863 768 19 26;1009 191 29 88;1010 397 31 78;1012 516 15 22;1033 508 17 21;1053 645 14 29;1050 685 16 28;1005 927 29 77;1006 1135 29 80;1007 1256 16 21;1029 1246 17 23;1046 1384 16 29;1045 1424 16 28;1226 360 14 30;1226 400 14 28;1226 437 14 28;1226 474 14 28;1221 1099 14 29;1221 1137 14 29;1221 1175 14 28;1221 1213 14 28;1400 407 15 28;1400 1138 15 28',
      L: '760 247 25 37;764 295 21 56;764 361 21 42;760 660 24 39;761 712 22 55;761 776 22 42', b: '1010 644 30 78;1006 1383 29 78',
      o: '907 298 32 73;907 712 32 73', y: '1489 402 38 44;1469 1119 58 48',
      w: '810 219 45 16;854 314 43 15;813 506 52 19;1010 169 48 18;1005 378 47 20;1006 595 47 10;1006 610 47 8;1006 626 47 8;1046 641 9 12;1005 907 48 20;1000 1117 48 19;1000 1333 48 10;1000 1347 48 9;1000 1364 48 9;1041 1379 9 12',
      s: '742 503 38 8;780 589 50 10;834 636 24 10;979 256 24 9;981 452 24 10;976 980 24 10;976 1191 24 10' },
    '785 265 813 288;785 310 813 310;785 380 813 325;784 680 813 703;783 727 813 724;783 795 813 740;840 308 907 305;840 725 907 718;847 247 907 315;877 237 907 310;865 392 907 345;882 780 907 760;840 320 832 375;840 735 845 770;829 573 836 578;854 578 854 680;939 309 1009 207;939 309 1010 405;1038 205 1070 175;1038 225 1070 260;1038 250 1070 220;1038 265 1070 240;1041 410 1070 385;1041 440 1070 520;1041 455 1070 440;1041 470 1012 525;1041 470 1033 519;1027 527 1070 560;1040 660 1053 655;1040 690 1050 698;1034 940 1066 915;1034 960 1066 990;1034 980 1066 950;1035 1145 1066 1130;1035 1170 1066 1250;1035 1190 1066 1180;1035 1215 1007 1266;1035 1215 1029 1257;1216 375 1226 375;1216 413 1226 413;1216 450 1226 450;1216 487 1226 487;1308 375 1349 413;1308 426 1368 426;1382 416 1400 420;1382 426 1400 424;1415 421 1489 421;1415 423 1489 425;1306 1116 1360 1144;1306 1154 1374 1154;1394 1146 1400 1150;1415 1154 1426 1154;1456 1154 1469 1143;347 1016 457 1000;325 1032 1006 1140',
    [610, 626, 634, 642, 670, 688, 700].map((y) => `M1216 ${y}H1227M1212 ${y + 740}H1226`).join('')
    + 'M592 757C690 757 665 640 680 510S640 253 760 253M592 757C680 757 680 665 760 665M593 795C720 795 650 600 680 480S670 301 764 301M593 795C680 795 690 718 761 718M593 853C700 853 670 650 684 520S680 370 764 370M593 853C690 853 690 785 761 785M939 309C1020 309 960 480 958 560S970 660 1010 660M939 320C960 400 790 480 790 560Q790 572 810 572M889 519C935 525 915 570 895 620S870 712 907 724M865 392Q835 440 838 506M939 724C1000 724 960 830 972 880S985 932 1005 932M939 724C1020 724 995 850 965 960S945 1130 1006 1140M939 724C1050 724 1040 840 1000 980C950 1130 915 1180 915 1280C915 1370 950 1397 1006 1397'),
  cluster('matrix(.33333 0 0 .46556 3440 680)',
    [[97, 64, 893, 1448, '#a2a19c', '#8b8a86'], [348, 199, 256, 256, '#a58fd6', '#87b'], [649, 311, 331, 40, '#a68fd8', '#97c'], [649, 353, 331, 106, '#a68fd8', '#97c']],
    { g: '227 701 44 8;227 712 25 7;227 722 26 6;227 732 44 7;227 742 60 8;227 753 81 6;227 764 38 6;227 773 59 7;227 782 56 7;571 527 43 9;575 692 45 8;577 870 30 8;653 331 47 7;655 370 50 7;654 438 37 7;516 902 44 8;516 915 44 8;194 1324 15 6;639 646 14 8;611 1185 33 7;611 1213 24 6;611 1238 68 6;611 1264 24 6;611 1298 24 6;334 1472 24 6',
      c: '428 852 38 12;430 888 40 15;531 521 30 12;637 587 39 30;637 673 39 30;525 857 32 29;733 253 33 16;776 251 33 14;766 330 32 9;808 320 33 16;765 380 32 9;806 370 33 18;858 362 31 26;763 438 32 9;805 428 31 17;540 975 32 24;540 1000 32 22;601 980 32 25;679 1060 32 21;682 1089 31 20;682 1114 31 21;682 1140 31 21;684 1170 31 21;684 1197 31 21;684 1222 31 21;684 1248 31 22;684 1276 31 22;767 1094 35 125;754 1317 34 18;695 1339 33 23;341 1361 34 22;363 1443 29 10;408 1436 32 18;424 1466 33 17;382 1471 35 23;386 1498 31 11',
      b: '953 234 23 30;953 269 23 31;953 317 23 30;953 360 23 23;953 419 23 31;946 1144 25 36;490 1407 39 36',
      o: '456 203 145 248;424 670 129 159;112 1316 45 21', y: '700 76 279 145;797 523 189 331;341 579 298 82;653 225 77 26;653 252 77 26;653 280 77 24;528 463 77 33;439 859 76 9;434 880 78 10;635 957 78 70;610 1066 55 7;610 1095 58 7;610 1120 56 7;610 1146 56 7;610 1176 56 7;610 1203 56 7;610 1227 56 7;610 1255 56 7;610 1277 58 18;728 1152 24 9',
      s: '893 243 43 7;865 291 88 7;908 282 44 7;694 341 78 7;692 392 78 7;689 449 78 8;908 325 44 7;865 334 88 7;908 380 44 8;908 433 44 7;865 441 88 7;446 991 79 8;841 1162 77 7;858 1172 44 7;594 1345 95 8;592 1354 97 8;295 1401 49 7;262 1426 94 8;316 1436 91 6;284 1451 78 6;270 1483 95 8;278 1498 97 7' },
    `0 711 227 714;0 720 227 724;0 731 227 735;0 746 227 745;0 788 227 756;271 705 424 740;252 714 424 755;253 725 424 697;271 735 424 708;287 745 424 770;308 756 424 778;265 768 424 733;286 776 424 745;283 785 424 800;601 214 700 149;601 232 653 237;601 255 653 262;601 275 653 292;601 295 653 240;601 318 653 262;601 336 653 292;601 360 654 374;601 380 653 334;601 432 654 441;730 249 953 240;730 274 953 274;700 334 766 334;841 328 953 322;705 374 765 384;889 374 953 366;691 441 763 442;836 436 953 424;676 688 797 688;${fan(713, [1070, 1099, 1124, 1150, 1180, 1207, 1232, 1258, 1287], 767, 1098, 14)};802 1157 946 1157;157 1326 754 1322;157 1333 490 1425;788 1322 868 1180;375 1372 490 1420;356 1430 490 1430;407 1439 490 1435;457 1474 490 1413;525 995 540 985;525 995 540 1010;572 987 601 992;572 1010 601 995;560 905 601 985;560 918 525 992;728 1350 754 1328;904 1175 946 1160`,
    Array.from({ length: 38 }, (_, i) => `M433 ${213 + i * 6.2}H456`).join('')
    + 'M554 825C700 825 680 900 600 1000S440 1190 620 1298M554 818C720 820 720 890 610 990S440 1180 620 1264M554 812C750 815 700 900 610 1000S450 1180 620 1240M554 806C760 810 710 920 600 1020S460 1190 620 1214M554 800C760 805 720 910 600 1040S470 1190 620 1188M554 792C780 800 710 900 590 1050S570 1140 610 1148M554 786C790 800 720 920 590 1030S570 1110 610 1123M554 780C800 790 720 900 590 1030S570 1090 610 1098M470 829C490 960 460 1060 610 1069M554 740Q620 735 590 760L554 806M430 829Q380 850 430 857M470 829Q350 880 432 896M470 895C490 895 495 910 516 906M524 452L356 579Q230 680 424 688M573 579L530 558Q480 535 531 527M209 1326C330 1330 240 1400 270 1440Q285 1475 334 1475'),
]
const lights = [
  [1254, 354, '#f0f'], [1254, 401, '#0ff'], [1254, 440, '#ff0'], [1252, 481, '#999'],
  [1249, 1096, '#f0f'], [1249, 1140, '#0ff'], [1249, 1180, '#ff0'], [1247, 1219, '#999'],
]
const charts = [[1070, 150, 'Loads'], [1070, 361, 'EUI'], [1070, 574, 'Emb. Carbon (excl struct)'], [1227, 574, 'Operational Carbon']]
const mm = [...Array(12).keys()]
const up = [182, 195, 176, 178, 186, 190, 186, 181, 180, 183, 198, 187]
const dn = [312, 316, 319, 312, 300, 292, 289, 292, 297, 303, 309, 314]
const top = [391, 417, 441, 470, 477, 472, 450, 442, 452, 457, 415, 380]
const yel = [450, 455, 466, 478, 486, 488, 482, 474, 472, 460, 456, 448]
const labels = [
  ['Hypergraph Reference Script 2', 57, 528, 18, 235], ['(c) Ramon Weber 2024, reweber@mit.edu', 58, 542, 8.6, 160], ['Environmental and spatial simulation', 58, 560.5, 8.6, 139],
  ['01 Initialization', 64, 605.5, 17.5, 115], ['Evaluate and Visualize', 727, 812.6, 8.8, 87], ['02 Geometric Conversion', 1256, 704, 17.5, 195],
  ['02b Weather File (EPW)', 1256, 913, 17.5, 185], ['03 Daylight', 1629, 704, 17.5, 86], ['04 Energy', 1626, 930, 17.5, 79], ['05 Json Output', 3474, 724.7, 17.5, 116],
]
const vLabels = [
  ['Hypergraph Reference Script 2', 4154, 591, 673], ['(c) Ramon Weber 2024', 4155, 647, 502], ['Enviornmental and spatial simulation', 4154, 757.5, 792],
  ['Input Floorplan', 4153, 1585, 326], ['Target', 5083, 1584, 141], ['Evaluation', 6237, 1584, 229],
]
const report = [
  ['Sim: 51', 1149, 52], ['Placed: Hypergraph Reference Script 1', 1171, 279], ['(c) Ramon Weber 2024', 1193, 166], ['Transfer layout via hypergraph', 1237, 222],
  ['Building:', 1280, 63], ['Apt: 0', 1302, 43], ['Excess Area [m2]: 24.364586', 1324, 205], ['sDA: 0.5755', 1346, 85],
  ['Excess Emissions Standard [kgCO2e/a]: 152.502819', 1367.5, 371], ['Emissions Standard [kgCO2e/a]: 716.675811', 1389.5, 319], ['Emissions High Performance[kgCO2e/a]: 631.671318', 1411.5, 381.5],
]
const dots = []
for (const y of [432, 488, 543, 599, 651, 704, 756, 809, 863]) for (const x of [872, 888, 905, 921, 937, 953, 970]) dots.push([x, y])
for (const y of [582, 638, 695, 751, 807, 863]) for (const x of [987, 1004, 1021, 1037, 1054, 1071, 1088, 1105, 1121, 1139]) if (y > 640 || x < 1060) dots.push([x, y])
</script>

<template>
  <div class="screen">
    <svg class="defs" width="0" height="0">
      <defs>
        <linearGradient id="hexg" x1="0" y1="0" x2="0" y2="1"><stop offset="0" stop-color="#555" /><stop offset=".5" stop-color="#1c1c1c" /><stop offset="1" stop-color="#333" /></linearGradient>
        <linearGradient id="boxg" x1="0" y1="0" x2="0" y2="1"><stop offset="0" stop-color="#ccc" /><stop offset="1" stop-color="#8a8a8a" /></linearGradient>
        <linearGradient id="mag" x1="0" y1="0" x2="1" y2="0"><stop offset="0" stop-color="#e6007e" /><stop offset="1" stop-color="#f6a" /></linearGradient>
        <radialGradient id="gball" cx=".35" cy=".3" r=".8"><stop offset="0" stop-color="#fff" /><stop offset="1" stop-color="#666" /></radialGradient>
        <radialGradient id="bball" cx=".35" cy=".3" r=".8"><stop offset="0" stop-color="#7af" /><stop offset="1" stop-color="#0a2a9c" /></radialGradient>
        <linearGradient id="roomA" x1="0" y1="0" x2="0" y2="1"><stop offset="0" stop-color="#2f9ff8" /><stop offset=".6" stop-color="#2aa9ee" /><stop offset="1" stop-color="#3d97fb" /></linearGradient>
        <radialGradient id="hotA" cx=".5" cy=".08" r=".78"><stop offset="0" stop-color="#ff5c0a" /><stop offset=".15" stop-color="#fb9a20" /><stop offset=".28" stop-color="#d8dc34" /><stop offset=".44" stop-color="#5cf07a" /><stop offset=".68" stop-color="#1fc8d4" /><stop offset="1" stop-color="#2f9ff8" stop-opacity="0" /></radialGradient>
        <linearGradient id="roomB" x1="0" y1="0" x2="0" y2="1"><stop offset="0" stop-color="#4263e4" /><stop offset=".35" stop-color="#3f86fb" /><stop offset=".7" stop-color="#26a6f0" /><stop offset="1" stop-color="#18c9c4" /></linearGradient>
        <radialGradient id="hotB" cx=".5" cy="1" r=".5"><stop offset="0" stop-color="#e2dc34" /><stop offset=".3" stop-color="#cfe534" /><stop offset=".55" stop-color="#5cea7c" /><stop offset="1" stop-color="#18c9c4" stop-opacity="0" /></radialGradient>
        <linearGradient id="roomC" x1="0" y1="0" x2="0" y2="1"><stop offset="0" stop-color="#425be0" /><stop offset=".4" stop-color="#4176f5" /><stop offset="1" stop-color="#3a9bfb" /></linearGradient>
        <radialGradient id="hotC" cx=".52" cy="1" r=".52"><stop offset="0" stop-color="#e2dc34" /><stop offset=".4" stop-color="#b6ee3a" /><stop offset=".62" stop-color="#35e39c" /><stop offset=".85" stop-color="#2aa5f2" stop-opacity=".8" /><stop offset="1" stop-color="#3a8bfb" stop-opacity="0" /></radialGradient>
        <pattern id="minor" x="4154.7" y="1488.6" width="23.12" height="23.12" patternUnits="userSpaceOnUse"><path d="M0 0H23.12M0 0V23.12" fill="none" stroke="#8f959d" stroke-width="2" /></pattern>
        <pattern id="major" x="4154.7" y="1488.6" width="231.2" height="231.2" patternUnits="userSpaceOnUse"><path d="M0 0H231.2M0 0V231.2" fill="none" stroke="#7f848c" stroke-width="4" /></pattern>
      </defs>
    </svg>

    <section class="gh">
      <header class="gh-title"><span>Grasshopper - Weber2024 Hypergraph Reference Script 2 Environmental Simulation</span>
        <svg class="wbtns" viewBox="0 0 170 34"><path d="M4 16H20M78 11h12v12H78zM81 11V8h12v12H90M146 9L161 24M161 9L146 24" fill="none" stroke="#999" stroke-width="1.500" /></svg>
      </header>
      <nav class="gh-menu"><span v-for="m in ghMenu" :key="m.t" :style="{ width: u(m.w) }">{{ m.t }}</span><b>Weber2024 Hypergraph Reference Script 2 Environmental Simulation</b></nav>
      <nav class="gh-tabs"><span class="on">Params</span><span v-for="(m, i) in ghTabs" :key="i" :style="{ width: u(m.w) }">{{ m.t }}</span></nav>
      <div class="ribbon">
        <div v-for="p in ribbon" :key="p.t" class="panel" :style="{ width: u(p.w) }">
          <div class="pgroups">
            <div v-for="(g, i) in p.groups" :key="i" class="pgroup" :style="{ width: u(g.w) }">
              <div v-for="(c, j) in g.cols" :key="j" class="pcol"><svg v-for="(ic, k) in c" :key="k" viewBox="0 0 36 34" v-html="ic" /></div>
            </div>
          </div>
          <div class="plabel">{{ p.t }}<i v-if="p.arrow">↓</i></div>
        </div>
      </div>
      <div class="gh-tools">
        <svg class="tl" viewBox="0 0 90 36"><path d="M10 3H26L35 10V22H10Z" fill="#eee" stroke="#555" /><path d="M7 34V17H18L21 13H35V34Z" fill="#4cb01f" stroke="#25700c" /><path d="M48 2H80V34H51L48 31Z" fill="#2a6be0" stroke="#123a94" stroke-width="1.500" /><rect x="53" y="3" width="22" height="14" fill="#e8e8ec" /><rect x="54" y="21" width="19" height="13" fill="#9aa" /><rect x="57" y="23" width="5" height="9" fill="#226" /></svg>
        <div class="combo"><span>16%</span><svg viewBox="0 0 12 12"><path d="M1 3L6 8L11 3" fill="none" stroke="#444" stroke-width="1.500" /></svg></div>
        <svg class="tm" viewBox="300 0 160 36"><path d="M304 12V3H314M324 3H334V12M334 23V33H324M314 33H304V23" fill="none" stroke="#222" stroke-width="4" /><path d="M314 13L324 23M324 13L314 23" stroke="#222" stroke-width="3" /><path d="M344 17H353L348.500 22ZM403 17H412L407.500 22Z" fill="#111" /><path d="M362 18Q377 0 393 18Q377 34 362 18Z" fill="#d8eef8" stroke="#234" stroke-width="2" /><circle cx="377" cy="18" r="9" fill="#38b0e4" stroke="#124" /><circle cx="377" cy="18" r="4" fill="#111" /><path d="M430 25L448 3L450 20L440 30Z" fill="#e33b2c" stroke="#833" /><path d="M420 11Q430 18 420 28Q426 36 436 30" fill="none" stroke="#522" stroke-width="2.500" /></svg>
        <svg class="tr" viewBox="3515 283 323 44">
          <path d="M3539 286L3550 303H3528Z" fill="#ccc" stroke="#777" /><circle cx="3539" cy="309" r="11" fill="#333" />
          <ellipse cx="3581" cy="304" rx="14" ry="16" fill="#ddd" stroke="#666" stroke-width="2" /><path d="M3572 312L3590 296M3573 300h8v-8M3590 306h-8v9" stroke="#666" stroke-width="2" fill="none" />
          <path d="M3603 284.500H3641M3603 323.500H3641" stroke="#1e7b9e" stroke-width="2" /><rect x="3603" y="286" width="38" height="37" fill="#ddf0f8" /><path d="M3621 287L3637 304L3621 321L3605 304Z" fill="#b3140f" stroke="#600" /><path d="M3621 291L3633 301L3621 303Z" fill="#e55" />
          <path d="M3650 288V322M3781 288V322" stroke="#bbb" /><path d="M3666 288Q3676 294 3690 288Q3694 304 3688 316Q3676 320 3668 318Q3674 302 3666 288" fill="#0f9494" stroke="#055" />
          <path d="M3704 292L3722 287Q3736 300 3726 312L3710 306Z" fill="#4ba312" stroke="#263" /><path d="M3704 306Q3720 308 3726 314Q3716 324 3706 318Z" fill="#ccc" stroke="#888" />
          <circle cx="3756" cy="303" r="15" fill="#eee" stroke="#777" /><path d="M3756 288A15 15 0 0 0 3756 318Z" fill="#f19a1d" /><circle cx="3801" cy="304" r="14" fill="#5a9fec" stroke="#1b4d9c" stroke-width="1.500" /><circle cx="3797" cy="299" r="5" fill="#b8dafc" /><path d="M3824 302H3832L3828 307Z" fill="#111" />
        </svg>
      </div>
      <svg class="gh-canvas" viewBox="0 326 3838 1737" preserveAspectRatio="none">
        <rect x="0" y="326" width="3838" height="1737" fill="#cfcac1" /><path d="M42 2063V500H3838V2063Z" fill="#d4d0c8" stroke="none" /><path d="M42 2063V500H3838" fill="none" stroke="#111" stroke-width="1.600" />
        <path d="M1.500 326V2063" stroke="#77736e" stroke-width="2" />
        <g v-for="(c, ci) in clusters" :key="ci" :transform="c.m" stroke-width=".6">
          <rect v-for="(g, i) in c.groups" :key="'g' + i" :x="g[0]" :y="g[1]" :width="g[2]" :height="g[3]" :fill="g[4]" :stroke="g[5]" class="ns" />
          <path v-if="ci === 2" d="M780 588C780 540 815 528 828 545C860 545 862 585 850 600C830 605 830 640 805 643C788 640 778 620 780 588Z" fill="#e8536b" />
          <path v-if="ci === 0" d="M1129 664H1166V881H1129ZM1177 658H1247V881H1177Z" fill="#8f8d9d" stroke="#333" class="ns" /><path v-if="ci === 0" d="M1129 664H1136V881H1129ZM1213 658H1221V881H1213Z" fill="#2a2a2a" />
          <path v-if="ci === 3" d="M354 209H433V451H354Z" fill="#8f8d9d" stroke="#333" class="ns" /><path v-if="ci === 3" d="M354 209H368V451H354Z" fill="#2a2a2a" />
          <path :d="c.wires" fill="none" stroke="#1a1a1a" stroke-opacity=".8" stroke-width=".6" class="ns" />
          <g v-for="(n, i) in c.nodes" :key="i">
            <rect :x="n.x" :y="n.y" :width="n.w" :height="n.h" :fill="n.f || '#d4d4d0'" :stroke="n.k === 'r' ? '#c22' : '#222'" class="ns" />
            <rect v-if="'colL'.includes(n.k) && n.h > 8" :x="n.x + n.w * (n.k === 'o' ? .36 : .36)" :y="n.y" :width="n.w * (n.k === 'c' ? .3 : .14)" :height="n.h" fill="#2c2c2c" />
            <rect v-if="n.k === 'b'" :x="n.x + n.w * .45" :y="n.y" :width="n.w * .55" :height="n.h" fill="#2c2c2c" />
            <rect v-if="n.k === 'L'" :x="n.x" :y="n.y + n.h * .78" :width="n.w" :height="n.h * .22" fill="#222" />
            <rect v-if="n.k === 's'" :x="n.x" :y="n.y" :width="n.w * .4" :height="n.h" fill="#8a8a8e" />
          </g>
        </g>
        <g transform="matrix(.66964 0 0 .37628 2150 880)" stroke-width=".7">
          <g v-for="(l, i) in lights" :key="'l' + i"><rect :x="l[0]" :y="l[1]" width="55" height="38" :fill="l[2]" stroke="#333" class="ns" /><rect :x="l[0]" :y="l[1]" width="55" height="7" fill="#000" fill-opacity=".4" /></g>
          <g v-for="o in [0, 1]" :key="o" :transform="o ? 'translate(-4 739)' : ''">
            <g v-for="p in charts" :key="p[2]">
              <rect :x="p[0]" :y="p[1]" width="146" height="201" fill="#fff" stroke="#222" stroke-width="1" class="ns" /><rect :x="p[0] + 1" :y="p[1] + 1" width="12" height="199" fill="#8d8b9b" stroke="#222" class="ns" />
              <path :d="[0, 1, 2, 3, 4, 5, 6].map(k => `M${p[0] + 36} ${p[1] + 20 + k * 24}h105`).join('')" stroke="#bbb" class="ns" />
              <text :transform="`translate(${p[0] + 86} ${p[1] + 14}) scale(1 1.78)`" font-size="7" text-anchor="middle" fill="#333">{{ p[2] }}</text>
              <text :transform="`translate(${p[0] + 82} ${p[1] + 193}) scale(1 1.78)`" font-size="4.500" text-anchor="middle" fill="#444">• Equip • Fans • Light • HotWater • Heat • Cool</text>
              <text v-for="k in 6" :key="k" :transform="`translate(${p[0] + 33} ${p[1] + k * 25}) scale(1 1.78)`" font-size="4" text-anchor="end" fill="#444">{{ 140 - k * 20 }}00</text>
            </g>
            <g v-for="i in mm" :key="i">
              <path :d="`M${1109 + i * 8.9} 172h4V243h-4z`" fill="#d8d8d8" /><path :d="`M${1109 + i * 8.9} ${up[i]}h4V243h-4z`" fill="#a8d21d" /><path :d="`M${1109 + i * 8.9} ${up[i] + 25}h4V243h-4z`" fill="#ffb05c" /><path :d="`M${1109 + i * 8.9} 222h4V243h-4z`" fill="#ffe11a" /><path :d="`M${1109 + i * 8.9} 234h4V243h-4z`" fill="#d92038" />
              <path :d="`M${1109 + i * 8.9} 244h4V${dn[i]}h-4z`" fill="#1c74d0" /><path :d="`M${1109 + i * 8.9} 244h4V${282 - Math.abs(6 - i)}h-4z`" fill="#b4dc24" /><path :d="`M${1109 + i * 8.9} 244h4V260h-4z`" fill="#ffe11a" />
              <path :d="`M${1100 + i * 9.6} ${top[i]}h4.500V538h-4.500z`" :fill="i > 4 && i < 9 ? '#2389d4' : '#dc2038'" /><path :d="`M${1100 + i * 9.6} ${yel[i]}h4.500V538h-4.500z`" fill="#ffa65c" /><path :d="`M${1100 + i * 9.6} ${yel[i] + 6 + (i % 5) * 2}h4.500V538h-4.500z`" fill="#ffe11a" /><path :d="`M${1100 + i * 9.6} 520h4.500V538h-4.500z`" fill="#777" />
            </g>
            <path d="M1106 168V320M1106 243.500H1213M1097 380V538H1213M1109 594V744H1213M1266 594V750H1370" fill="none" stroke="#111" stroke-width=".9" class="ns" />
            <path d="M1135 715H1186V731H1135Z" fill="#94d214" /><path d="M1135 730H1186V740H1135Z" fill="#19bcd6" /><path d="M1135 739H1186V744H1135Z" fill="#c84a1c" /><path d="M1292 744H1343V748H1292Z" fill="#f3b640" />
          </g>
        </g>
        <path d="M2648 861H2664C3100 861 3050 1011 3440 1011M2648 873H2664C3080 873 3080 1020 3440 1020M2648 856H2664C3100 856 3050 1015 3440 1015M3173 1037C3300 1037 3330 1047 3440 1047M3173 1310C3330 1300 3300 1048 3440 1047M1067 714H1230" fill="none" stroke="#1a1a1a" stroke-opacity=".75" stroke-width="1.100" />
        <text v-for="l in labels" :key="l[0]" :x="l[1]" :y="l[2]" :font-size="l[3]" :textLength="l[4]" lengthAdjust="spacingAndGlyphs" class="clabel">{{ l[0] }}</text>
        <g fill="none" stroke="#333" stroke-width="4"><circle cx="3712" cy="1992" r="28" fill="#dcdad6" stroke="#fff" stroke-opacity=".6" stroke-width="7" /><path d="M3680 1986C3684 1966 3702 1958 3720 1966" stroke-width="7" /><path d="M3690 1998L3736 1978" stroke="#aaa" /></g>
        <path d="M3668 1978L3692 1982L3676 1998Z" fill="#222" />
        <rect x="3" y="2024" width="48" height="38" fill="#b9b6b0" stroke="#555" /><path d="M12 2056H44V2048H34L28 2030L22 2048H12Z" fill="#333" />
      </svg>
      <footer class="gh-status"><svg viewBox="0 0 24 24"><circle cx="12" cy="12" r="10" fill="#2a6fc9" /><path d="M12 6V8M12 10V18" stroke="#fff" stroke-width="3" /></svg><span>Save successfully completed... (5 seconds ago)</span><em>1.0.0007</em></footer>
    </section>

    <section class="rh">
      <header class="rh-title"><svg viewBox="0 0 26 26"><rect width="26" height="26" fill="#111" /><path d="M4 10L12 3L14 14L20 6L22 14L13 24Z" fill="#eee" /></svg><span>Hypergraph Reference Script 2 Environmental Simulation.3dm (63 KB) - Rhino 7 Educational - [Top]</span>
        <svg class="wbtns" viewBox="0 0 170 34"><path d="M2 16H16M72 11h11v12H72zM75 11V8h11v12H83M144 9L159 24M159 9L144 24" fill="none" stroke="#111" stroke-width="1.500" /></svg>
      </header>
      <nav class="rh-menu"><span v-for="m in rhMenu" :key="m.t" :style="{ width: u(m.w) }">{{ m.a }}<u>{{ m.k }}</u>{{ m.b }}</span></nav>
      <div class="cmd">
        <div class="hist"><p>1 text added to selection.</p><p>Command: _Save</p><p>File successfully saved as F:\Dropbox (Personal)\WORK\MIT\Projects\46_AutomatedFloorplan_MethodsPaper\REPO-CODE\01_Sample Scripts\Hypergraph Reference Script 2 Environmental Simulation.3dm.</p>
          <svg class="sb" viewBox="0 0 25 68"><rect width="25" height="68" fill="#f0f0f0" /><path d="M7 20L12 12L17 20M7 52L12 60L17 52" fill="none" stroke="#555" stroke-width="2" /></svg></div>
        <div class="prompt"><b>Command:</b><i /><svg class="sb" viewBox="0 0 25 28"><path d="M1 1H24V13H1ZM1 15H24V27H1Z" fill="#eee" stroke="#888" /><path d="M8 10L12 4L16 10ZM8 18L12 24L16 18Z" /></svg></div>
      </div>
      <nav class="rh-tabs"><span class="on">Standard</span><span v-for="m in rhTabs" :key="m.t" :style="{ width: u(m.w) }">{{ m.t }}</span><svg viewBox="0 0 24 24"><circle cx="12" cy="12" r="7" fill="none" stroke="#888" stroke-width="5" stroke-dasharray="4 1.500" /></svg></nav>
      <div class="rh-tools"><div v-for="(ic, i) in toolIcons" :key="i" class="tool"><svg viewBox="0 0 30 30" v-html="ic" /><i v-if="!noTri.includes(i)" /></div></div>
      <div class="work">
        <aside><div v-for="(ic, i) in sideIcons" :key="i" class="tool"><svg viewBox="0 0 30 30" v-html="ic" /><i v-if="!sideNoTri.includes(i)" /></div></aside>
        <div class="view">
          <div class="vtag"><b>Top</b><svg viewBox="0 0 12 10"><path d="M0 1H12L6 9Z" fill="#222c55" /></svg></div>
          <svg viewBox="3889.500 253.500 3790.500 1750" preserveAspectRatio="none">
            <rect x="3889" y="253" width="3791" height="1751" fill="#9da3ab" /><rect x="3889" y="253" width="3791" height="1751" fill="url(#minor)" opacity=".5" /><rect x="3889" y="253" width="3791" height="1751" fill="url(#major)" opacity=".8" />
            <path d="M4154.700 253V1488" stroke="#3c9a46" stroke-width="2.400" /><path d="M4154.700 1488.600H7680" stroke="#964f56" stroke-width="2.400" />
            <path d="M4154.700 1026.400H4848.300V1488.600H4154.700ZM5079.500 1026.400H6004.300V1488.600H5079.500ZM6235.500 1026.400H6928V1488.600H6235.500Z" fill="none" stroke="#000" stroke-width="1.500" />
            <text v-for="l in vLabels" :key="l[0]" :x="l[1]" :y="l[2]" :textLength="l[3]" lengthAdjust="spacingAndGlyphs" class="vl">{{ l[0] }}</text>
            <text v-for="l in report" :key="l[0]" x="6342" :y="l[1]" :textLength="l[2]" lengthAdjust="spacingAndGlyphs" class="rl">{{ l[0] }}</text>
            <g transform="matrix(1.24362 0 0 .40816 4100 1000)" stroke-width=".6">
              <g fill="none">
                <path d="M105 427H220M105 910H388" stroke="#2027c4" stroke-width=".9" class="ns" /><path d="M105 427V910M220 427V910" stroke="#8a86c0" class="ns" /><path d="M105 648H388V910" stroke="#7a5a92" class="ns" />
                <path d="M220 427H315.500V579M260.500 427V579" stroke="#e8e27a" stroke-width="1" class="ns" /><path d="M220 579H315.500M220 648H315.500V910" stroke="#d77896" class="ns" /><path d="M315.500 579V648" stroke="#fff" class="ns" />
              </g>
              <ellipse v-for="(p, i) in [[246, 577], [291, 577], [220, 611], [271, 646], [220, 741], [315, 748]]" :key="'e' + i" :cx="p[0]" :cy="p[1]" rx="3.200" ry="10" fill="#fff" stroke="#222" class="ns" />
              <rect x="864" y="410" width="113" height="214" fill="url(#roomA)" /><rect x="864" y="410" width="113" height="214" fill="url(#hotA)" />
              <rect x="864" y="628" width="113" height="260" fill="url(#roomB)" /><rect x="864" y="628" width="113" height="260" fill="url(#hotB)" />
              <path d="M979 560H1073V628H1147V888H979Z" fill="url(#roomC)" /><path d="M979 560H1073V628H1147V888H979Z" fill="url(#hotC)" />
              <rect x="979" y="410" width="94" height="144" fill="#fcfc72" /><path d="M979 406H1075" stroke="#5cae7c" stroke-width="1.300" class="ns" /><path d="M1018 410V554" stroke="#d88a5a" stroke-width="2" class="ns" />
              <path d="M862 402H1075V624H1148V897H862Z" fill="none" stroke="#000" stroke-width="1.500" class="ns" /><path d="M862 407H978M862 626H978M978 556H1074M1074 626H1148M862 889H1148" stroke="#000" stroke-width="1.600" class="ns" /><path d="M977.500 402V889" stroke="#000" stroke-width="1.400" class="ns" />
              <path d="M979 465H987V490H979M979 518Q991 516 991 528T979 540M1020 458H1033V552H1020ZM1022 470H1031V548H1022ZM1073 425H1064V454H1073M1073 480Q1061 478 1061 490T1073 502M1070 430V450" fill="none" stroke="#111" class="ns" />
              <ellipse v-for="(p, i) in dots" :key="i" :cx="p[0]" :cy="p[1]" rx="1.100" ry="3.500" fill="#0a0a22" /><path d="M1083 588V612L1076 600Z" fill="#822" stroke="#400" class="ns" />
              <path d="M1275 452H1312V623H1275ZM1241 555H1275V623H1241ZM1312 452H1335V503H1339V555H1312ZM1354 457H1380V555H1354ZM1385 412H1408V516H1381V464H1385ZM1255 675H1312V886H1203V817H1255ZM1340 630H1385V726H1340ZM1329 726H1407V886H1329ZM1435 783H1481V886H1435Z" fill="#98eef2" stroke="#5eb6bb" class="ns" />
              <path d="M1198 407H1408M1198 627H1481M1312 558H1408M1198 889H1481" stroke="#000" stroke-width="1.200" class="ns" /><path d="M1198 407V889M1312 407V889M1408 407V627M1407 627V889M1481 627V889" stroke="#000" stroke-width="1.200" class="ns" /><path d="M1352 407V558" stroke="#111" class="ns" />
              <path d="M1241 589H1275V622H1241ZM1241 589L1258 622L1275 589M1241 622L1258 589L1275 622M1293 504H1311V590H1293ZM1293 590V622H1311M1284 598H1292V622M1314 464H1322V490H1314M1314 517Q1325 516 1325 528T1314 540M1355 458H1367V552H1355ZM1357 480H1365V546H1357ZM1408 425H1398V454H1408M1408 480Q1396 478 1396 490T1408 502M1203 851H1254V885H1203ZM1203 851L1228 885L1254 851M1203 885L1228 851L1254 885M1272 724H1310V836H1272ZM1274 726H1300V834H1274M1300 731H1308V776H1300ZM1300 785H1308V830H1300ZM1349 632H1369V704H1349ZM1349 642h6v22h-6zM1349 676h6v20h-6zM1369 642h6v22h-6zM1369 676h6v20h-6zM1359 706H1366V720H1359ZM1340 748H1385M1357 782H1377V812H1357ZM1391 783H1406V829H1391ZM1391 793H1406M1391 820H1406M1349 839H1388M1352 839V884H1384V839M1352 872H1384M1435 851H1481M1469 784V817H1481M1446 855H1457V882H1446ZM1458 852H1469V885H1458Z" fill="none" stroke="#123" stroke-width=".55" class="ns" />
            </g>
            <path d="M3943.600 1904V1949.500H3989.600" fill="none" stroke="#5c6168" stroke-width="1.800" /><text x="3948" y="1903" class="ax">y</text><text x="3993" y="1950" class="ax">x</text>
          </svg>
        </div>
      </div>
      <nav class="vtabs"><span>Perspective</span><svg viewBox="0 0 68 32" preserveAspectRatio="none"><path d="M0 0L28 30H67V0" fill="#eef0f4" stroke="#b8bac6" stroke-width="1.500" /></svg><span class="vt">Top</span><span class="f">Front</span><span class="r">Right</span><svg class="plus" viewBox="0 0 16 20"><path d="M5 2H10V7H14V12H10V18H5V12H2V7H5Z" fill="#fff" stroke="#888" /></svg></nav>
      <div class="osnap"><label v-for="o in osnaps" :key="o.t" :style="{ width: u(o.w) }"><span class="cb" :class="{ part: o.t === 'Project', off: o.t === 'Disable' }"><svg v-if="checked.includes(o.t)" viewBox="0 0 18 18"><path d="M3 9L7 13.500L15 4" fill="none" stroke="#222" stroke-width="1.800" /></svg><i v-if="o.t === 'Project'" /></span>{{ o.t }}</label></div>
      <footer class="rh-status"><span v-for="s in status" :key="s[0]" :class="{ hi: s[2], lay: s[3] }" :style="{ width: u(s[1]) }"><i v-if="s[3]" />{{ s[0] }}</span><span class="x" :style="{ width: u(134) }">Record History</span><span class="x" :style="{ width: u(49) }">Filter</span><span class="x">Absolute tolerance: 0.01</span></footer>
    </section>
  </div>
</template>

<style>
body { margin: 0; overflow: hidden; }
</style>

<style scoped>
.screen { --u: 0.533333px; position: relative; display: flex; width: 4096px; height: 1121px; overflow: hidden; font-family: "Open Sans", "Noto Sans", sans-serif; color: #111; background: #eaebef; white-space: nowrap; }
.defs { position: absolute; }
.ns { vector-effect: non-scaling-stroke; }
.gh { width: calc(var(--u) * 3838); display: flex; flex-direction: column; background: #f0f0f0; flex: none; border-right: 1px solid #e6e6e6; box-sizing: content-box; }
.gh-title { height: calc(var(--u) * 34); background: #fff; color: #999; font-size: calc(var(--u) * 17.3); letter-spacing: calc(var(--u) * -.43); display: flex; justify-content: space-between; align-items: center; padding-left: calc(var(--u) * 2); }
.wbtns { width: calc(var(--u) * 170); height: calc(var(--u) * 34); margin-right: calc(var(--u) * 20); }
.gh-menu { height: calc(var(--u) * 41); display: flex; align-items: center; padding-left: calc(var(--u) * 17); font-size: calc(var(--u) * 17.3); background: linear-gradient(90deg, #f0f0f0, #fcfcfc); }
.gh-menu b { font-weight: normal; margin-left: auto; margin-right: calc(var(--u) * 11); letter-spacing: calc(var(--u) * -.37); font-size: calc(var(--u) * 17.6); }
.gh-menu span, .gh-tabs span, .rh-menu span, .rh-tabs span { flex: none; box-sizing: border-box; }
.gh-tabs { height: calc(var(--u) * 33); display: flex; align-items: center; font-size: calc(var(--u) * 15.6); color: #666; border-bottom: 1px solid #8e8e8e; box-sizing: border-box; }
.gh-tabs .on { width: calc(var(--u) * 82); height: calc(var(--u) * 33); line-height: calc(var(--u) * 30); margin-right: calc(var(--u) * 12); padding-left: calc(var(--u) * 12); background: linear-gradient(#fff, #e4e4e4); border: 1px solid #999; border-bottom: 0; border-radius: 5px 5px 0 0; color: #111; }
.ribbon { height: calc(var(--u) * 173); display: flex; padding: calc(var(--u) * 5) 0 0 calc(var(--u) * 5); gap: calc(var(--u) * 6.3); box-sizing: border-box; background: linear-gradient(#d7d7d7, #f1f1f1 90%); border-radius: 0 5px 0 0; }
.panel { height: calc(var(--u) * 150); display: flex; flex-direction: column; border: 1px solid #999; border-radius: 4px; box-sizing: border-box; background: linear-gradient(#dcdcdc, #ececec); overflow: hidden; flex: none; }
.pgroups { flex: 1; display: flex; align-items: center; }
.pgroup { display: flex; justify-content: center; gap: calc(var(--u) * 6); flex: none; box-sizing: border-box; border-right: 1px solid #c4c4c4; height: calc(var(--u) * 120); }
.pgroup:last-child { border: 0; }
.pcol { display: flex; flex-direction: column; gap: calc(var(--u) * 8); width: calc(var(--u) * 36); }
.pcol svg { width: calc(var(--u) * 36); height: calc(var(--u) * 34); display: block; font-family: "Liberation Sans", sans-serif; }
.plabel { height: calc(var(--u) * 20); line-height: calc(var(--u) * 19); background: #222; color: #fff; text-align: center; font-size: calc(var(--u) * 15.5); position: relative; }
.plabel i { position: absolute; right: calc(var(--u) * 4); font-style: normal; color: #888; }
.gh-tools { height: calc(var(--u) * 45); box-sizing: border-box; border-top: 2px solid #707070; background: linear-gradient(#fff, #f4f4f4); display: flex; align-items: center; }
.tl { width: calc(var(--u) * 90); height: calc(var(--u) * 36); border-right: 1px solid #bbb; margin-right: calc(var(--u) * 2); }
.combo { width: calc(var(--u) * 202); height: calc(var(--u) * 33); box-sizing: border-box; border: 1px solid #777; background: #fff; display: flex; justify-content: space-between; align-items: center; padding: 0 calc(var(--u) * 6) 0 calc(var(--u) * 3); font-size: calc(var(--u) * 17); }
.combo svg { width: calc(var(--u) * 12); }
.tm { width: calc(var(--u) * 160); height: calc(var(--u) * 36); margin-left: calc(var(--u) * 4); }
.tr { width: calc(var(--u) * 323); height: calc(var(--u) * 43); margin-left: auto; }
.gh-canvas { width: calc(var(--u) * 3838); height: calc(var(--u) * 1737); display: block; font-family: "Liberation Sans", Arial, sans-serif; flex: none; }
.clabel { fill: #0a0a0a; stroke: #0a0a0a; stroke-width: .2; }
.gh-status { flex: 1; display: flex; align-items: center; background: #f0f0f0; font-size: calc(var(--u) * 17); padding: calc(var(--u) * 4) calc(var(--u) * 46) 0 calc(var(--u) * 4); }
.gh-status svg { width: calc(var(--u) * 22); margin-right: calc(var(--u) * 6); }
.gh-status em { margin-left: auto; font-style: normal; color: #999; }

.rh { flex: 1; min-width: 0; display: flex; flex-direction: column; background: #eaebef; }
.rh > * { flex: none; }
.rh-title { height: calc(var(--u) * 34); background: #fff; display: flex; align-items: center; font-size: calc(var(--u) * 17.5); letter-spacing: calc(var(--u) * -.24); padding-left: calc(var(--u) * 2); }
.rh-title > svg:first-child { width: calc(var(--u) * 25); margin-right: calc(var(--u) * 5); }
.rh-title .wbtns { margin-left: auto; margin-right: calc(var(--u) * 24); letter-spacing: 0; }
.rh-menu { height: calc(var(--u) * 28); background: #fff; display: flex; align-items: center; padding-left: calc(var(--u) * 7); font-size: calc(var(--u) * 17.2); letter-spacing: calc(var(--u) * -.2); }
.rh-menu u { text-underline-offset: 1px; }
.cmd { height: calc(var(--u) * 101); background: #fff; border-top: calc(var(--u) * 4) solid #ececec; margin-left: calc(var(--u) * 8); box-sizing: border-box; display: flex; flex-direction: column; font-size: calc(var(--u) * 17.9); letter-spacing: calc(var(--u) * -.4); }
.hist { height: calc(var(--u) * 68); position: relative; border-bottom: 1px solid #c2c4d0; padding-left: calc(var(--u) * 3); box-sizing: border-box; overflow: hidden; display: flex; flex-direction: column; justify-content: flex-end; }
.hist p { margin: 0; height: calc(var(--u) * 24.500); line-height: calc(var(--u) * 26); }
.sb { position: absolute; right: 0; top: 0; height: 100%; width: calc(var(--u) * 25); }
.prompt { flex: 1; position: relative; display: flex; align-items: center; padding-left: calc(var(--u) * 3); }
.prompt b { font-size: calc(var(--u) * 17); }
.prompt i { width: 1px; height: calc(var(--u) * 24); background: #000; margin-left: calc(var(--u) * 8); }
.rh-tabs { height: calc(var(--u) * 38); position: relative; display: flex; align-items: flex-end; border-bottom: 1px solid #bfc1cd; box-sizing: border-box; padding-left: calc(var(--u) * 11); font-size: calc(var(--u) * 16.6); color: #333; }
.rh-tabs span { height: calc(var(--u) * 29); line-height: calc(var(--u) * 30); }
.rh-tabs .on { padding-left: calc(var(--u) * 16); border: 1px solid #bfc1cd; border-bottom: 0; border-radius: 4px 4px 0 0; margin-right: calc(var(--u) * 18); width: calc(var(--u) * 111); line-height: calc(var(--u) * 27); }
.rh-tabs svg { position: absolute; right: 0; top: calc(var(--u) * 10); width: calc(var(--u) * 24); }
.rh-tools { height: calc(var(--u) * 52); display: flex; align-items: center; padding: 0 0 calc(var(--u) * 8) calc(var(--u) * 7); box-sizing: border-box; }
.tool { width: calc(var(--u) * 42); height: calc(var(--u) * 34); position: relative; display: flex; align-items: center; justify-content: center; flex: none; }
.tool svg { width: calc(var(--u) * 30); height: calc(var(--u) * 30); display: block; }
.tool i { position: absolute; right: 0; bottom: calc(var(--u) * -3); border-left: calc(var(--u) * 9) solid transparent; border-bottom: calc(var(--u) * 9) solid #666; }
.work { height: calc(var(--u) * 1750.500); display: flex; }
aside { width: calc(var(--u) * 49.500); padding-top: calc(var(--u) * 9); display: flex; flex-direction: column; align-items: center; box-sizing: border-box; }
aside .tool { height: calc(var(--u) * 42.050); width: calc(var(--u) * 44); }
aside .tool i { bottom: 0; }
.view { flex: 1; position: relative; border: 1px solid #b9ccdc; border-width: 1px 0; box-sizing: border-box; }
.view > svg { width: 100%; height: 100%; display: block; }
.vtag { position: absolute; left: 0; top: 0; width: calc(var(--u) * 70); height: calc(var(--u) * 26); background: #8b9ff0; color: #222c55; font-size: calc(var(--u) * 17); display: flex; align-items: center; padding-left: calc(var(--u) * 10); box-sizing: border-box; }
.vtag svg { width: calc(var(--u) * 12); border-left: 1px solid #333; margin-left: calc(var(--u) * 6); padding-left: calc(var(--u) * 2); height: calc(var(--u) * 22); }
.vl { font: 48px "Liberation Sans", Arial, sans-serif; fill: #000; }
.rl { font: 16.500px "Open Sans", sans-serif; fill: #111; }
.ax { font: 20px "Liberation Sans", Arial, sans-serif; fill: #5c6168; }
.vtabs { height: calc(var(--u) * 36); display: flex; align-items: center; padding-left: calc(var(--u) * 64); font-size: calc(var(--u) * 17); color: #333; position: relative; }
.vtabs svg { width: calc(var(--u) * 68); height: calc(var(--u) * 31); align-self: flex-start; margin-left: calc(var(--u) * -8); }
.vtabs .vt { margin-left: calc(var(--u) * -37); width: calc(var(--u) * 55); }
.vtabs .f { width: calc(var(--u) * 66); }
.vtabs .r { width: calc(var(--u) * 66); }
.vtabs .plus { width: calc(var(--u) * 15); height: calc(var(--u) * 20); margin: 0; align-self: center; }
.osnap { height: calc(var(--u) * 36); display: flex; align-items: center; padding: calc(var(--u) * 6) 0 0 calc(var(--u) * 14); box-sizing: border-box; font-size: calc(var(--u) * 16.800); color: #222; letter-spacing: calc(var(--u) * -.3); }
.osnap label { display: flex; align-items: center; gap: calc(var(--u) * 5); flex: none; }
.cb { width: calc(var(--u) * 20); height: calc(var(--u) * 19); box-sizing: border-box; border: 1px solid #222; background: #fff; display: flex; align-items: center; justify-content: center; }
.cb svg { width: 100%; height: 100%; }
.cb.part { border-color: #0a66b0; background: #cde6f8; }
.cb.part i { width: 55%; height: 55%; background: #888; }
.cb.off { border-color: #bbb; background: #dcdcdc; }
.rh-status { height: calc(var(--u) * 26); border-top: 1px solid #c2c4d2; display: flex; font-size: calc(var(--u) * 17); line-height: calc(var(--u) * 27); letter-spacing: calc(var(--u) * -.3); color: #222; padding-left: calc(var(--u) * 1); }
.rh-status span { box-sizing: border-box; text-align: center; border-right: 1px solid #ccd; flex: none; }
.rh-status .hi { background: #cdd5ec; font-weight: 600; letter-spacing: calc(var(--u) * -.7); }
.rh-status .lay { text-align: left; display: flex; align-items: center; padding-left: calc(var(--u) * 4); gap: calc(var(--u) * 4); }
.rh-status .lay i { width: calc(var(--u) * 17); height: calc(var(--u) * 17); background: #000; }
.rh-status .x { border: 0; text-align: left; padding-left: calc(var(--u) * 8); }
</style>
